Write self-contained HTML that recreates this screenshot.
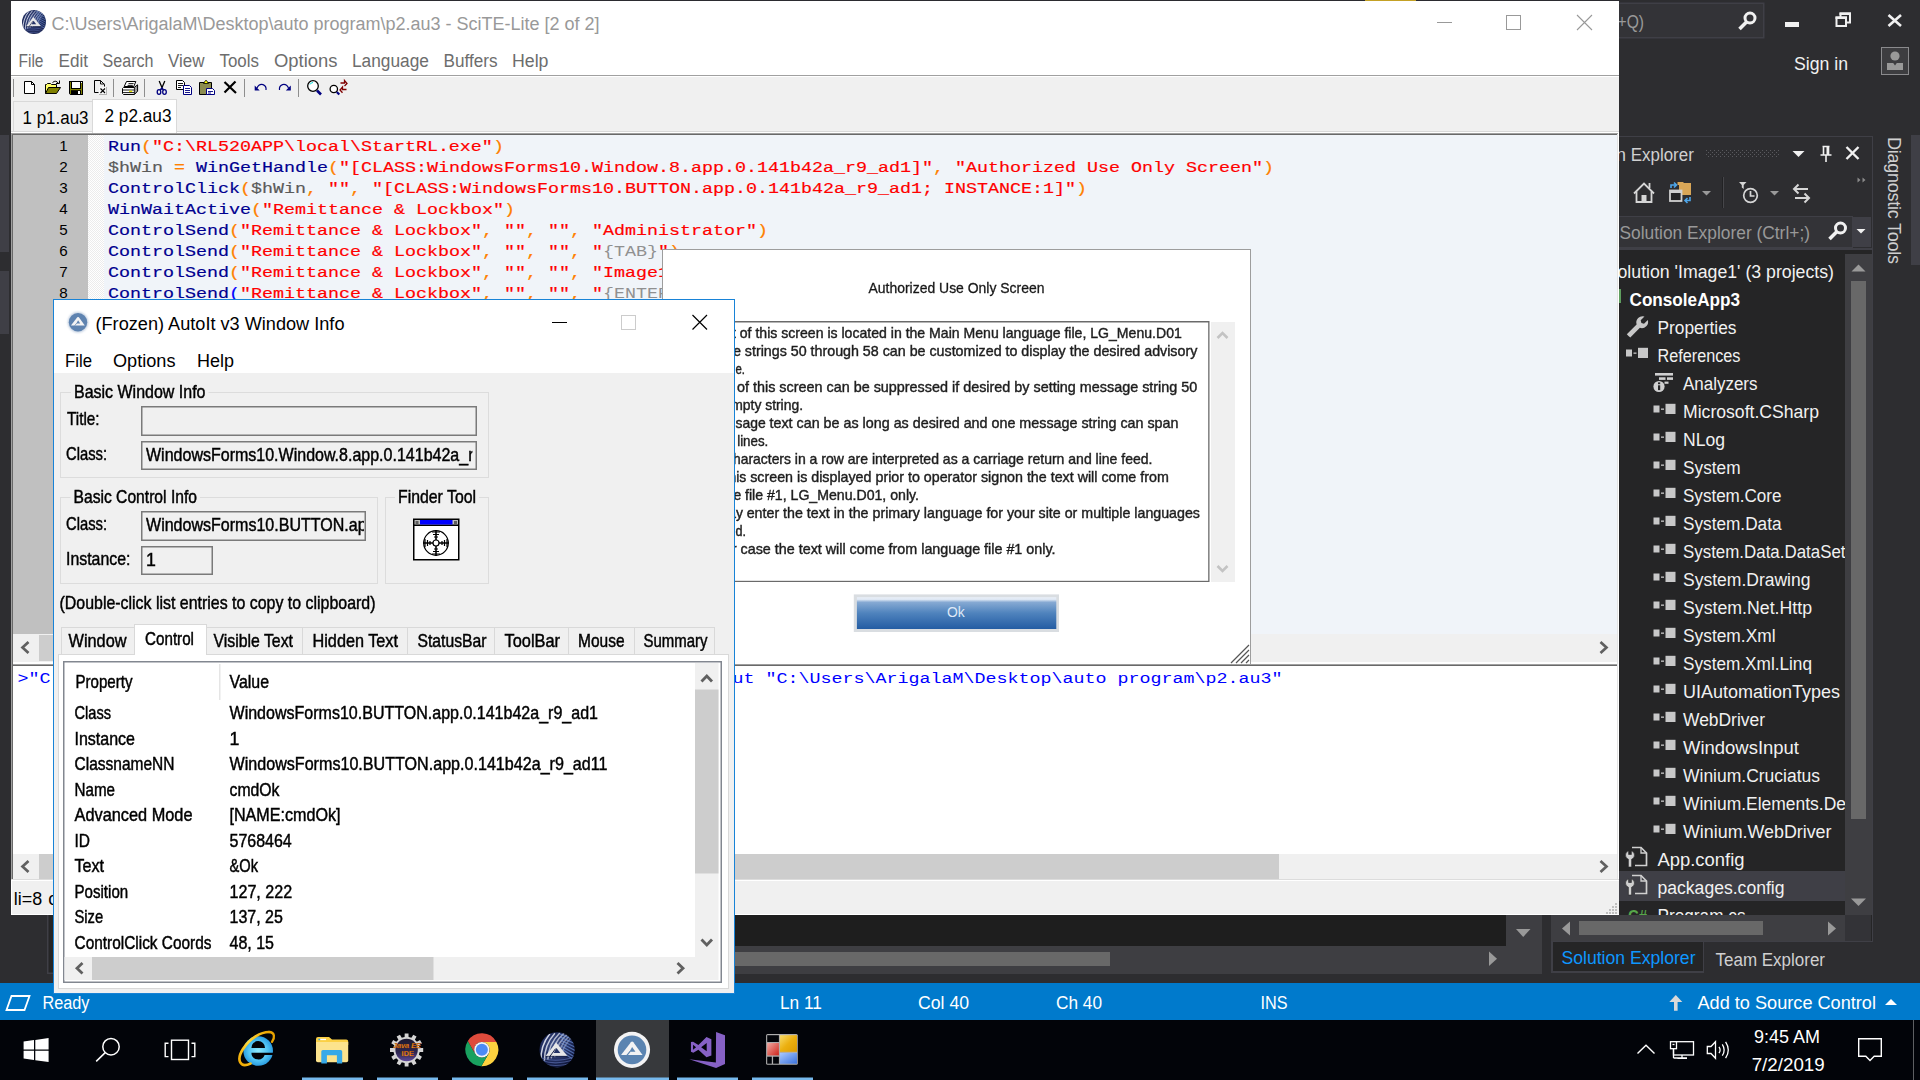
<!DOCTYPE html>
<html><head><meta charset="utf-8"><title>screen</title>
<style>
html,body{margin:0;padding:0;background:#2d2d30;overflow:hidden}
body{width:1920px;height:1080px;font-family:"Liberation Sans",sans-serif}
svg{display:block;position:absolute;left:0;top:0}
text{white-space:pre}
</style></head><body>
<svg width="1920" height="1080" viewBox="0 0 1920 1080">
<rect x="0" y="0" width="1920" height="1080" fill="#2d2d30" />
<rect x="0" y="135" width="9" height="117" fill="#3f3f46" />
<rect x="0" y="271" width="9" height="63" fill="#3f3f46" />
<rect x="1600" y="2.5" width="164.5" height="36.0" fill="#3f3f46" />
<rect x="1600" y="4" width="163" height="33" fill="#333337" />
<text x="1617.5" y="27.5" font-family="Liberation Sans" font-size="18" fill="#999999" textLength="26.5" lengthAdjust="spacingAndGlyphs" >+Q)</text>
<g stroke="#f1f1f1" fill="none"><circle cx="1750" cy="18" r="5" stroke-width="3"/><path d="M1746.5 22 L1739.5 29" stroke-width="3.6"/></g>
<rect x="1785" y="22" width="14" height="5" fill="#f1f1f1" />
<g fill="none" stroke="#f1f1f1" stroke-width="2"><path d="M1840.5 17 V13.5 H1850 V22.5 H1846.5"/><rect x="1836.5" y="17.5" width="9.5" height="8.5"/></g>
<rect x="1839.5" y="12.5" width="11.5" height="2.5" fill="#f1f1f1" />
<rect x="1835.5" y="16.5" width="11.5" height="2.5" fill="#f1f1f1" />
<path d="M1888.5 15 L1901 26 M1901 15 L1888.5 26" stroke="#f1f1f1" stroke-width="2.6" fill="none"/>
<text x="1794" y="70" font-family="Liberation Sans" font-size="18.5" fill="#f1f1f1" textLength="54" lengthAdjust="spacingAndGlyphs" >Sign in</text>
<rect x="1881.5" y="47.5" width="27" height="27" fill="#3d3d40" stroke="#8a8a8d" stroke-width="1"/>
<circle cx="1895" cy="56" r="4.6" fill="#999999"/><path d="M1887 70 V63 H1893.2 L1895 65.5 L1896.8 63 H1903 V70 Z" fill="#999999"/>
<text transform="translate(1887.5,137) rotate(90)" font-family="Liberation Sans" font-size="18" fill="#d0d0d0" textLength="127" lengthAdjust="spacing">Diagnostic Tools</text>
<rect x="1911" y="135" width="9" height="130" fill="#3f3f46" />
<rect x="1619" y="136" width="254" height="805" fill="#252526" />
<rect x="1619" y="136" width="254" height="118" fill="#2d2d30" />
<rect x="1619" y="136" width="254" height="1" fill="#3f3f46" />
<rect x="1872" y="136" width="1" height="805" fill="#3f3f46" />
<text x="1630.8" y="161" font-family="Liberation Sans" font-size="18" fill="#d0d0d0" textLength="63" lengthAdjust="spacingAndGlyphs" >Explorer</text>
<text x="1626" y="161" font-family="Liberation Sans" font-size="18" fill="#d0d0d0" text-anchor="end" >n</text>
<rect x="1706" y="150" width="1" height="1" fill="#5a5a5e" />
<rect x="1710" y="150" width="1" height="1" fill="#5a5a5e" />
<rect x="1714" y="150" width="1" height="1" fill="#5a5a5e" />
<rect x="1718" y="150" width="1" height="1" fill="#5a5a5e" />
<rect x="1722" y="150" width="1" height="1" fill="#5a5a5e" />
<rect x="1726" y="150" width="1" height="1" fill="#5a5a5e" />
<rect x="1730" y="150" width="1" height="1" fill="#5a5a5e" />
<rect x="1734" y="150" width="1" height="1" fill="#5a5a5e" />
<rect x="1738" y="150" width="1" height="1" fill="#5a5a5e" />
<rect x="1742" y="150" width="1" height="1" fill="#5a5a5e" />
<rect x="1746" y="150" width="1" height="1" fill="#5a5a5e" />
<rect x="1750" y="150" width="1" height="1" fill="#5a5a5e" />
<rect x="1754" y="150" width="1" height="1" fill="#5a5a5e" />
<rect x="1758" y="150" width="1" height="1" fill="#5a5a5e" />
<rect x="1762" y="150" width="1" height="1" fill="#5a5a5e" />
<rect x="1766" y="150" width="1" height="1" fill="#5a5a5e" />
<rect x="1770" y="150" width="1" height="1" fill="#5a5a5e" />
<rect x="1774" y="150" width="1" height="1" fill="#5a5a5e" />
<rect x="1778" y="150" width="1" height="1" fill="#5a5a5e" />
<rect x="1708" y="152" width="1" height="1" fill="#5a5a5e" />
<rect x="1712" y="152" width="1" height="1" fill="#5a5a5e" />
<rect x="1716" y="152" width="1" height="1" fill="#5a5a5e" />
<rect x="1720" y="152" width="1" height="1" fill="#5a5a5e" />
<rect x="1724" y="152" width="1" height="1" fill="#5a5a5e" />
<rect x="1728" y="152" width="1" height="1" fill="#5a5a5e" />
<rect x="1732" y="152" width="1" height="1" fill="#5a5a5e" />
<rect x="1736" y="152" width="1" height="1" fill="#5a5a5e" />
<rect x="1740" y="152" width="1" height="1" fill="#5a5a5e" />
<rect x="1744" y="152" width="1" height="1" fill="#5a5a5e" />
<rect x="1748" y="152" width="1" height="1" fill="#5a5a5e" />
<rect x="1752" y="152" width="1" height="1" fill="#5a5a5e" />
<rect x="1756" y="152" width="1" height="1" fill="#5a5a5e" />
<rect x="1760" y="152" width="1" height="1" fill="#5a5a5e" />
<rect x="1764" y="152" width="1" height="1" fill="#5a5a5e" />
<rect x="1768" y="152" width="1" height="1" fill="#5a5a5e" />
<rect x="1772" y="152" width="1" height="1" fill="#5a5a5e" />
<rect x="1776" y="152" width="1" height="1" fill="#5a5a5e" />
<rect x="1706" y="154" width="1" height="1" fill="#5a5a5e" />
<rect x="1710" y="154" width="1" height="1" fill="#5a5a5e" />
<rect x="1714" y="154" width="1" height="1" fill="#5a5a5e" />
<rect x="1718" y="154" width="1" height="1" fill="#5a5a5e" />
<rect x="1722" y="154" width="1" height="1" fill="#5a5a5e" />
<rect x="1726" y="154" width="1" height="1" fill="#5a5a5e" />
<rect x="1730" y="154" width="1" height="1" fill="#5a5a5e" />
<rect x="1734" y="154" width="1" height="1" fill="#5a5a5e" />
<rect x="1738" y="154" width="1" height="1" fill="#5a5a5e" />
<rect x="1742" y="154" width="1" height="1" fill="#5a5a5e" />
<rect x="1746" y="154" width="1" height="1" fill="#5a5a5e" />
<rect x="1750" y="154" width="1" height="1" fill="#5a5a5e" />
<rect x="1754" y="154" width="1" height="1" fill="#5a5a5e" />
<rect x="1758" y="154" width="1" height="1" fill="#5a5a5e" />
<rect x="1762" y="154" width="1" height="1" fill="#5a5a5e" />
<rect x="1766" y="154" width="1" height="1" fill="#5a5a5e" />
<rect x="1770" y="154" width="1" height="1" fill="#5a5a5e" />
<rect x="1774" y="154" width="1" height="1" fill="#5a5a5e" />
<rect x="1778" y="154" width="1" height="1" fill="#5a5a5e" />
<rect x="1708" y="156" width="1" height="1" fill="#5a5a5e" />
<rect x="1712" y="156" width="1" height="1" fill="#5a5a5e" />
<rect x="1716" y="156" width="1" height="1" fill="#5a5a5e" />
<rect x="1720" y="156" width="1" height="1" fill="#5a5a5e" />
<rect x="1724" y="156" width="1" height="1" fill="#5a5a5e" />
<rect x="1728" y="156" width="1" height="1" fill="#5a5a5e" />
<rect x="1732" y="156" width="1" height="1" fill="#5a5a5e" />
<rect x="1736" y="156" width="1" height="1" fill="#5a5a5e" />
<rect x="1740" y="156" width="1" height="1" fill="#5a5a5e" />
<rect x="1744" y="156" width="1" height="1" fill="#5a5a5e" />
<rect x="1748" y="156" width="1" height="1" fill="#5a5a5e" />
<rect x="1752" y="156" width="1" height="1" fill="#5a5a5e" />
<rect x="1756" y="156" width="1" height="1" fill="#5a5a5e" />
<rect x="1760" y="156" width="1" height="1" fill="#5a5a5e" />
<rect x="1764" y="156" width="1" height="1" fill="#5a5a5e" />
<rect x="1768" y="156" width="1" height="1" fill="#5a5a5e" />
<rect x="1772" y="156" width="1" height="1" fill="#5a5a5e" />
<rect x="1776" y="156" width="1" height="1" fill="#5a5a5e" />
<path d="M1792.5 151 H1804.5 L1798.5 157 Z" fill="#f1f1f1" stroke="none" stroke-width="1" />
<g fill="none" stroke="#f1f1f1" stroke-width="1.6"><path d="M1822.5 146.5 H1829.5 M1823.5 147 V154.5 M1828.5 147 V154.5 M1820.5 155 H1831.5 M1826 155 V162"/></g>
<rect x="1826.5" y="147" width="2.5" height="8" fill="#f1f1f1" />
<path d="M1846.5 147 L1858.5 159 M1858.5 147 L1846.5 159" stroke="#f1f1f1" stroke-width="2.4" fill="none"/>
<g fill="none" stroke="#d6d6d6" stroke-width="1.8"><path d="M1634 193.5 L1644 183.5 L1654 193.5"/><path d="M1636.5 191.5 V202 H1651.5 V191.5"/><path d="M1649.5 183 V188"/></g>
<rect x="1641.5" y="195" width="5.0" height="7" fill="#d6d6d6" />
<g><rect x="1679" y="183" width="12" height="12" fill="#d8a657"/><rect x="1677.5" y="182" width="6" height="3" fill="#d8a657"/><rect x="1670" y="190.5" width="11.5" height="10.5" fill="#252526" stroke="#d0d0d0" stroke-width="1.8"/><rect x="1670" y="190" width="11.5" height="3" fill="#d0d0d0"/><path d="M1671 188 V185 H1676 M1674 182.5 L1676.5 185 L1674 187.5" fill="none" stroke="#4ea6ea" stroke-width="1.6"/><path d="M1690 197 V200.5 H1685.5 M1687.5 198 L1685 200.5 L1687.5 203" fill="none" stroke="#4ea6ea" stroke-width="1.6"/></g>
<path d="M1702 191 H1711 L1706.5 195.5 Z" fill="#999999" stroke="none" stroke-width="1" />
<rect x="1722" y="177" width="1" height="31" fill="#222224" />
<rect x="1723" y="177" width="1" height="31" fill="#46464a" />
<g fill="none" stroke="#d6d6d6" stroke-width="1.7"><circle cx="1750.5" cy="195.5" r="6.8"/><path d="M1750.5 191 V196 H1754.5"/></g>
<path d="M1739 182 H1746.5 L1743.7 185 V189 L1741.8 187.5 V185 Z" fill="#d6d6d6" stroke="none" stroke-width="1" />
<path d="M1770 191 H1779 L1774.5 195.5 Z" fill="#999999" stroke="none" stroke-width="1" />
<g fill="none" stroke="#d6d6d6" stroke-width="2"><path d="M1794 189 H1808 M1798.5 184.5 L1794 189 L1798.5 193.5"/><path d="M1795 198 H1809 M1804.5 193.5 L1809 198 L1804.5 202.5"/></g>
<path d="M1857.5 177.5 L1860.5 180 L1857.5 182.5 Z M1862.5 177.5 L1865.5 180 L1862.5 182.5 Z" fill="#8a8a8a" stroke="none" stroke-width="1" />
<rect x="1619" y="216" width="234" height="32" fill="#3f3f46" />
<rect x="1619" y="217" width="233" height="30" fill="#333337" />
<text x="1619.5" y="238.5" font-family="Liberation Sans" font-size="18" fill="#999999" textLength="190.5" lengthAdjust="spacingAndGlyphs" >Solution Explorer (Ctrl+;)</text>
<g stroke="#f1f1f1" fill="none"><circle cx="1840.5" cy="228" r="5" stroke-width="3"/><path d="M1837 231.5 L1829.5 239" stroke-width="3.6"/></g>
<rect x="1853" y="217" width="18" height="30" fill="#3f3f46" />
<path d="M1856.5 229 H1865.5 L1861 233.5 Z" fill="#f1f1f1" stroke="none" stroke-width="1" />
<rect x="1619" y="248" width="253" height="2" fill="#3f3f46" />
<rect x="1619" y="250" width="253" height="4" fill="#252526" />
<rect x="1845" y="254" width="27" height="661" fill="#3e3e42" />
<path d="M1851.5 271.5 L1858.5 264.5 L1865.5 271.5 Z" fill="#999999" stroke="none" stroke-width="1" />
<rect x="1851" y="281" width="15" height="538" fill="#686868" />
<path d="M1851 898.5 H1866 L1858.5 906 Z" fill="#999999" stroke="none" stroke-width="1" />
<text x="1617.5" y="278" font-family="Liberation Sans" font-size="18" fill="#f1f1f1" textLength="216.5" lengthAdjust="spacingAndGlyphs" >olution &#x27;Image1&#x27; (3 projects)</text>
<rect x="1619" y="289" width="2" height="14" fill="#5f9e5f" />
<text x="1629.5" y="306" font-family="Liberation Sans" font-size="18" fill="#ffffff" font-weight="bold" textLength="110.5" lengthAdjust="spacingAndGlyphs" >ConsoleApp3</text>
<path d="M1628.5 336 L1626.8 334.2 L1636.6 324.4 A6.3 6.3 0 0 1 1644.5 316.5 L1640.7 320.3 L1641.4 323 L1644 323.7 L1647.8 319.9 A6.3 6.3 0 0 1 1639.9 327.8 L1630.3 337.4 Z" fill="#c8c8c8"/>
<text x="1657.5" y="334" font-family="Liberation Sans" font-size="18" fill="#f1f1f1" textLength="79" lengthAdjust="spacingAndGlyphs" >Properties</text>
<rect x="1626" y="349.5" width="6" height="7.0" fill="#c8c8c8" />
<rect x="1633.5" y="352.5" width="3.0" height="1.3000000000000114" fill="#c8c8c8" />
<rect x="1638" y="347.8" width="10" height="10.199999999999989" fill="#c8c8c8" />
<text x="1657.5" y="362" font-family="Liberation Sans" font-size="18" fill="#f1f1f1" textLength="83" lengthAdjust="spacingAndGlyphs" >References</text>
<g fill="#d0d0d0"><rect x="1655" y="373" width="18" height="2.6"/><rect x="1659" y="377.3" width="6.5" height="2.6"/><rect x="1667" y="377.3" width="6" height="2.6"/><rect x="1664.5" y="381.6" width="4" height="2.2"/><circle cx="1659" cy="386.5" r="5.6"/></g><rect x="1658" y="385.3" width="2.2" height="4.8" fill="#252526"/><rect x="1658" y="382.4" width="2.2" height="1.8" fill="#252526"/>
<text x="1683" y="390" font-family="Liberation Sans" font-size="18" fill="#f1f1f1" textLength="74.5" lengthAdjust="spacingAndGlyphs" >Analyzers</text>
<rect x="1653.5" y="405.5" width="6.0" height="7.0" fill="#c8c8c8" />
<rect x="1661.0" y="408.5" width="3.0" height="1.3000000000000114" fill="#c8c8c8" />
<rect x="1665.5" y="403.8" width="10.0" height="10.199999999999989" fill="#c8c8c8" />
<text x="1683" y="418" font-family="Liberation Sans" font-size="18" fill="#f1f1f1" textLength="136" lengthAdjust="spacingAndGlyphs" >Microsoft.CSharp</text>
<rect x="1653.5" y="433.5" width="6.0" height="7.0" fill="#c8c8c8" />
<rect x="1661.0" y="436.5" width="3.0" height="1.3000000000000114" fill="#c8c8c8" />
<rect x="1665.5" y="431.8" width="10.0" height="10.199999999999989" fill="#c8c8c8" />
<text x="1683" y="446" font-family="Liberation Sans" font-size="18" fill="#f1f1f1" textLength="42" lengthAdjust="spacingAndGlyphs" >NLog</text>
<rect x="1653.5" y="461.5" width="6.0" height="7.0" fill="#c8c8c8" />
<rect x="1661.0" y="464.5" width="3.0" height="1.3000000000000114" fill="#c8c8c8" />
<rect x="1665.5" y="459.8" width="10.0" height="10.199999999999989" fill="#c8c8c8" />
<text x="1683" y="474" font-family="Liberation Sans" font-size="18" fill="#f1f1f1" textLength="57.5" lengthAdjust="spacingAndGlyphs" >System</text>
<rect x="1653.5" y="489.5" width="6.0" height="7.0" fill="#c8c8c8" />
<rect x="1661.0" y="492.5" width="3.0" height="1.3000000000000114" fill="#c8c8c8" />
<rect x="1665.5" y="487.8" width="10.0" height="10.199999999999989" fill="#c8c8c8" />
<text x="1683" y="502" font-family="Liberation Sans" font-size="18" fill="#f1f1f1" textLength="98.5" lengthAdjust="spacingAndGlyphs" >System.Core</text>
<rect x="1653.5" y="517.5" width="6.0" height="7.0" fill="#c8c8c8" />
<rect x="1661.0" y="520.5" width="3.0" height="1.2999999999999545" fill="#c8c8c8" />
<rect x="1665.5" y="515.8" width="10.0" height="10.200000000000045" fill="#c8c8c8" />
<text x="1683" y="530" font-family="Liberation Sans" font-size="18" fill="#f1f1f1" textLength="98.5" lengthAdjust="spacingAndGlyphs" >System.Data</text>
<rect x="1653.5" y="545.5" width="6.0" height="7.0" fill="#c8c8c8" />
<rect x="1661.0" y="548.5" width="3.0" height="1.2999999999999545" fill="#c8c8c8" />
<rect x="1665.5" y="543.8" width="10.0" height="10.200000000000045" fill="#c8c8c8" />
<text x="1683" y="558" font-family="Liberation Sans" font-size="18" fill="#f1f1f1" textLength="162.5" lengthAdjust="spacingAndGlyphs" >System.Data.DataSet</text>
<rect x="1653.5" y="573.5" width="6.0" height="7.0" fill="#c8c8c8" />
<rect x="1661.0" y="576.5" width="3.0" height="1.2999999999999545" fill="#c8c8c8" />
<rect x="1665.5" y="571.8" width="10.0" height="10.200000000000045" fill="#c8c8c8" />
<text x="1683" y="586" font-family="Liberation Sans" font-size="18" fill="#f1f1f1" textLength="127.5" lengthAdjust="spacingAndGlyphs" >System.Drawing</text>
<rect x="1653.5" y="601.5" width="6.0" height="7.0" fill="#c8c8c8" />
<rect x="1661.0" y="604.5" width="3.0" height="1.2999999999999545" fill="#c8c8c8" />
<rect x="1665.5" y="599.8" width="10.0" height="10.200000000000045" fill="#c8c8c8" />
<text x="1683" y="614" font-family="Liberation Sans" font-size="18" fill="#f1f1f1" textLength="129" lengthAdjust="spacingAndGlyphs" >System.Net.Http</text>
<rect x="1653.5" y="629.5" width="6.0" height="7.0" fill="#c8c8c8" />
<rect x="1661.0" y="632.5" width="3.0" height="1.2999999999999545" fill="#c8c8c8" />
<rect x="1665.5" y="627.8" width="10.0" height="10.200000000000045" fill="#c8c8c8" />
<text x="1683" y="642" font-family="Liberation Sans" font-size="18" fill="#f1f1f1" textLength="92.5" lengthAdjust="spacingAndGlyphs" >System.Xml</text>
<rect x="1653.5" y="657.5" width="6.0" height="7.0" fill="#c8c8c8" />
<rect x="1661.0" y="660.5" width="3.0" height="1.2999999999999545" fill="#c8c8c8" />
<rect x="1665.5" y="655.8" width="10.0" height="10.200000000000045" fill="#c8c8c8" />
<text x="1683" y="670" font-family="Liberation Sans" font-size="18" fill="#f1f1f1" textLength="129" lengthAdjust="spacingAndGlyphs" >System.Xml.Linq</text>
<rect x="1653.5" y="685.5" width="6.0" height="7.0" fill="#c8c8c8" />
<rect x="1661.0" y="688.5" width="3.0" height="1.2999999999999545" fill="#c8c8c8" />
<rect x="1665.5" y="683.8" width="10.0" height="10.200000000000045" fill="#c8c8c8" />
<text x="1683" y="698" font-family="Liberation Sans" font-size="18" fill="#f1f1f1" textLength="157" lengthAdjust="spacingAndGlyphs" >UIAutomationTypes</text>
<rect x="1653.5" y="713.5" width="6.0" height="7.0" fill="#c8c8c8" />
<rect x="1661.0" y="716.5" width="3.0" height="1.2999999999999545" fill="#c8c8c8" />
<rect x="1665.5" y="711.8" width="10.0" height="10.200000000000045" fill="#c8c8c8" />
<text x="1683" y="726" font-family="Liberation Sans" font-size="18" fill="#f1f1f1" textLength="82" lengthAdjust="spacingAndGlyphs" >WebDriver</text>
<rect x="1653.5" y="741.5" width="6.0" height="7.0" fill="#c8c8c8" />
<rect x="1661.0" y="744.5" width="3.0" height="1.2999999999999545" fill="#c8c8c8" />
<rect x="1665.5" y="739.8" width="10.0" height="10.200000000000045" fill="#c8c8c8" />
<text x="1683" y="754" font-family="Liberation Sans" font-size="18" fill="#f1f1f1" textLength="116" lengthAdjust="spacingAndGlyphs" >WindowsInput</text>
<rect x="1653.5" y="769.5" width="6.0" height="7.0" fill="#c8c8c8" />
<rect x="1661.0" y="772.5" width="3.0" height="1.2999999999999545" fill="#c8c8c8" />
<rect x="1665.5" y="767.8" width="10.0" height="10.200000000000045" fill="#c8c8c8" />
<text x="1683" y="782" font-family="Liberation Sans" font-size="18" fill="#f1f1f1" textLength="137" lengthAdjust="spacingAndGlyphs" >Winium.Cruciatus</text>
<rect x="1653.5" y="797.5" width="6.0" height="7.0" fill="#c8c8c8" />
<rect x="1661.0" y="800.5" width="3.0" height="1.2999999999999545" fill="#c8c8c8" />
<rect x="1665.5" y="795.8" width="10.0" height="10.200000000000045" fill="#c8c8c8" />
<text x="1683" y="810" font-family="Liberation Sans" font-size="18" fill="#f1f1f1" textLength="163" lengthAdjust="spacingAndGlyphs" >Winium.Elements.De</text>
<rect x="1653.5" y="825.5" width="6.0" height="7.0" fill="#c8c8c8" />
<rect x="1661.0" y="828.5" width="3.0" height="1.2999999999999545" fill="#c8c8c8" />
<rect x="1665.5" y="823.8" width="10.0" height="10.200000000000045" fill="#c8c8c8" />
<text x="1683" y="838" font-family="Liberation Sans" font-size="18" fill="#f1f1f1" textLength="148.5" lengthAdjust="spacingAndGlyphs" >Winium.WebDriver</text>
<rect x="1845" y="254" width="27" height="661" fill="#3e3e42" />
<path d="M1851.5 271.5 L1858.5 264.5 L1865.5 271.5 Z" fill="#999999" stroke="none" stroke-width="1" />
<rect x="1851" y="281" width="15" height="538" fill="#686868" />
<path d="M1851 898.5 H1866 L1858.5 906 Z" fill="#999999" stroke="none" stroke-width="1" />
<g fill="none" stroke="#d0d0d0" stroke-width="1.7"><path d="M1632 847.5 H1641 L1646.5 853 V865.5 H1635"/><path d="M1641 847.5 V853 H1646.5" stroke-width="1.3"/></g>
<path d="M1628.6 851 V854.5 H1631.4 V851 A4.3 4.3 0 0 1 1631.6 859.2 V867 H1628.4 V859.2 A4.3 4.3 0 0 1 1628.6 851 Z" fill="#d0d0d0" stroke="#252526" stroke-width="0.6"/>
<text x="1657.5" y="866" font-family="Liberation Sans" font-size="18" fill="#f1f1f1" textLength="87" lengthAdjust="spacingAndGlyphs" >App.config</text>
<rect x="1619" y="871" width="226" height="30" fill="#3f3f46" />
<g fill="none" stroke="#d0d0d0" stroke-width="1.7"><path d="M1632 875.5 H1641 L1646.5 881 V893.5 H1635"/><path d="M1641 875.5 V881 H1646.5" stroke-width="1.3"/></g>
<path d="M1628.6 879 V882.5 H1631.4 V879 A4.3 4.3 0 0 1 1631.6 887.2 V895 H1628.4 V887.2 A4.3 4.3 0 0 1 1628.6 879 Z" fill="#d0d0d0" stroke="#252526" stroke-width="0.6"/>
<text x="1657.5" y="894" font-family="Liberation Sans" font-size="18" fill="#f1f1f1" textLength="127" lengthAdjust="spacingAndGlyphs" >packages.config</text>
<clipPath id="cpProg"><rect x="1619" y="901" width="226" height="14"/></clipPath><g clip-path="url(#cpProg)">
<text x="1628" y="922" font-family="Liberation Sans" font-size="17" fill="#57a64a" font-weight="bold" textLength="19" lengthAdjust="spacingAndGlyphs" >C#</text>
<text x="1657.5" y="922" font-family="Liberation Sans" font-size="18" fill="#f1f1f1" textLength="88" lengthAdjust="spacingAndGlyphs" >Program.cs</text>
</g>
<rect x="53" y="915" width="1453" height="31" fill="#1e1e1e" />
<rect x="53" y="946" width="1453" height="28" fill="#3e3e42" />
<rect x="60" y="952" width="1050" height="14" fill="#686868" />
<rect x="47" y="915" width="6" height="59" fill="#3f3f46" />
<rect x="48.5" y="915" width="4.5" height="57.5" fill="#252526" />
<path d="M1489 951.5 V966 L1497 958.8 Z" fill="#999999" stroke="none" stroke-width="1" />
<rect x="1506" y="915" width="36" height="59" fill="#3e3e42" />
<path d="M1516 929 H1530.5 L1523.2 937 Z" fill="#999999" stroke="none" stroke-width="1" />
<rect x="1542" y="915" width="9" height="68" fill="#2d2d30" />
<rect x="1551" y="915" width="294" height="26" fill="#3e3e42" />
<path d="M1570 921.5 V935.5 L1562 928.5 Z" fill="#999999" stroke="none" stroke-width="1" />
<rect x="1579" y="921" width="184" height="14" fill="#686868" />
<path d="M1828 921.5 V935.5 L1836 928.5 Z" fill="#999999" stroke="none" stroke-width="1" />
<rect x="1845" y="915" width="26" height="26" fill="#333337" />
<rect x="1551" y="941" width="322" height="1" fill="#3f3f46" />
<rect x="1551" y="941" width="153" height="32" fill="#3f3f46" />
<rect x="1553" y="942" width="150" height="29" fill="#252526" />
<text x="1561.5" y="964" font-family="Liberation Sans" font-size="18" fill="#0e97ff" textLength="134" lengthAdjust="spacingAndGlyphs" >Solution Explorer</text>
<text x="1715.5" y="966" font-family="Liberation Sans" font-size="18" fill="#d0d0d0" textLength="109.5" lengthAdjust="spacingAndGlyphs" >Team Explorer</text>
<rect x="0" y="974" width="1920" height="9" fill="#2d2d30" />
<rect x="1873" y="136" width="4" height="838" fill="#2d2d30" />
<rect x="0" y="983" width="1920" height="37" fill="#007acc" />
<path d="M11.5 996 H29.5 L24.5 1010 H6.5 Z" fill="none" stroke="#ffffff" stroke-width="1.8" />
<text x="42.5" y="1009" font-family="Liberation Sans" font-size="18" fill="#ffffff" textLength="47" lengthAdjust="spacingAndGlyphs" >Ready</text>
<text x="780" y="1009" font-family="Liberation Sans" font-size="18" fill="#ffffff" textLength="42" lengthAdjust="spacingAndGlyphs" >Ln 11</text>
<text x="918" y="1009" font-family="Liberation Sans" font-size="18" fill="#ffffff" textLength="51" lengthAdjust="spacingAndGlyphs" >Col 40</text>
<text x="1056" y="1009" font-family="Liberation Sans" font-size="18" fill="#ffffff" textLength="46" lengthAdjust="spacingAndGlyphs" >Ch 40</text>
<text x="1260.5" y="1009" font-family="Liberation Sans" font-size="18" fill="#ffffff" textLength="27" lengthAdjust="spacingAndGlyphs" >INS</text>
<path d="M1675.8 995 L1682.3 1002 H1677.6 V1010.8 H1674 V1002 H1669.3 Z" fill="#d9d9d9" stroke="none" stroke-width="1" />
<text x="1697.5" y="1009" font-family="Liberation Sans" font-size="18" fill="#ffffff" textLength="178.5" lengthAdjust="spacingAndGlyphs" >Add to Source Control</text>
<path d="M1885 1005 L1891 999 L1897 1005 Z" fill="#ffffff" stroke="none" stroke-width="1" />
<rect x="11" y="0" width="1608" height="915" fill="#ffffff" />
<rect x="11" y="0" width="1608" height="1" fill="#2b2b30" />
<rect x="1365" y="0" width="51" height="1" fill="#c4a125" />
<defs><radialGradient id="sgb" cx="0.45" cy="0.4" r="0.65"><stop offset="0" stop-color="#46578f"/><stop offset="0.6" stop-color="#222e60"/><stop offset="1" stop-color="#141b40"/></radialGradient><clipPath id="scb"><circle cx="34" cy="22" r="12"/></clipPath></defs>
<circle cx="34" cy="22" r="12" fill="url(#sgb)"/>
<g clip-path="url(#scb)" fill="none">
<path d="M23.02 30.28 Q22.34 19.38 29.16 10.85" stroke="#eef2fb" stroke-width="0.99" opacity="0.85"/>
<path d="M25.34 29.47 Q25.2 18.69 32.5 10.65" stroke="#eef2fb" stroke-width="0.99" opacity="0.77"/>
<path d="M27.66 28.65 Q28.07 18.01 35.84 10.44" stroke="#eef2fb" stroke-width="0.99" opacity="0.69"/>
<path d="M29.98 27.83 Q30.93 17.33 39.18 10.24" stroke="#eef2fb" stroke-width="0.99" opacity="0.61"/>
<path d="M32.3 27.01 Q33.8 16.65 42.52 10.03" stroke="#eef2fb" stroke-width="0.99" opacity="0.53"/>
<path d="M34.61 26.19 Q36.66 15.97 45.86 9.83" stroke="#eef2fb" stroke-width="0.99" opacity="0.45"/>
<path d="M36.93 25.38 Q39.52 15.28 49.2 9.63" stroke="#eef2fb" stroke-width="0.99" opacity="0.37"/>
<path d="M35.98 11.19 Q41.43 13.58 47.57 15.97" stroke="#7299e2" stroke-width="0.82" opacity="0.62"/>
<path d="M36.32 13.31 Q41.43 15.69 47.57 18.35" stroke="#7299e2" stroke-width="0.82" opacity="0.62"/>
<path d="M36.66 15.42 Q41.43 17.81 47.57 20.74" stroke="#7299e2" stroke-width="0.82" opacity="0.62"/>
<path d="M37.0 17.53 Q41.43 19.92 47.57 23.13" stroke="#7299e2" stroke-width="0.82" opacity="0.62"/>
<path d="M37.34 19.65 Q41.43 22.03 47.57 25.51" stroke="#7299e2" stroke-width="0.82" opacity="0.62"/>
<path d="M37.68 21.76 Q41.43 24.15 47.57 27.9" stroke="#7299e2" stroke-width="0.82" opacity="0.62"/>
<path d="M38.02 23.88 Q41.43 26.26 47.57 30.28" stroke="#7299e2" stroke-width="0.82" opacity="0.62"/>
<path d="M23.7 27.56 Q33.25 30.97 45.52 26.88" stroke="#6a7fc4" stroke-width="0.75" opacity="0.55"/>
<path d="M23.7 29.33 Q33.25 32.74 45.52 28.65" stroke="#6a7fc4" stroke-width="0.75" opacity="0.55"/>
<path d="M23.7 31.1 Q33.25 34.51 45.52 30.42" stroke="#6a7fc4" stroke-width="0.75" opacity="0.55"/>
<path d="M23.7 32.88 Q33.25 36.28 45.52 32.19" stroke="#6a7fc4" stroke-width="0.75" opacity="0.55"/>
<path d="M23.7 34.65 Q33.25 38.06 45.52 33.97" stroke="#6a7fc4" stroke-width="0.75" opacity="0.55"/>
</g>
<path d="M26.16 26.13 L33.32 16.92 L41.02 26.13 Z" fill="#e6e6e8"/>
<path d="M33.59 20.74 L36.18 24.15 H31.61 Z" fill="#243266"/>
<path d="M29.3 26.19 L32.98 21.15" stroke="#1a244a" stroke-width="0.68"/>
<path d="M26.16 26.4 H41.02" stroke="#10183a" stroke-width="0.55" opacity="0.8"/>
<text x="51.5" y="30" font-family="Liberation Sans" font-size="18" fill="#999999" textLength="548" lengthAdjust="spacingAndGlyphs" >C:\Users\ArigalaM\Desktop\auto program\p2.au3 - SciTE-Lite [2 of 2]</text>
<rect x="1437" y="22" width="15" height="1" fill="#999999" />
<rect x="1506.5" y="15.5" width="14" height="14" fill="none" stroke="#999999" stroke-width="1"/>
<path d="M1577 15 L1592 30 M1592 15 L1577 30" stroke="#999999" stroke-width="1.1" fill="none"/>
<text x="18.5" y="67" font-family="Liberation Sans" font-size="18" fill="#6d6d6d" textLength="25" lengthAdjust="spacingAndGlyphs" >File</text>
<text x="58.5" y="67" font-family="Liberation Sans" font-size="18" fill="#6d6d6d" textLength="29.5" lengthAdjust="spacingAndGlyphs" >Edit</text>
<text x="102.5" y="67" font-family="Liberation Sans" font-size="18" fill="#6d6d6d" textLength="51" lengthAdjust="spacingAndGlyphs" >Search</text>
<text x="168" y="67" font-family="Liberation Sans" font-size="18" fill="#6d6d6d" textLength="36.5" lengthAdjust="spacingAndGlyphs" >View</text>
<text x="219.5" y="67" font-family="Liberation Sans" font-size="18" fill="#6d6d6d" textLength="39.5" lengthAdjust="spacingAndGlyphs" >Tools</text>
<text x="274" y="67" font-family="Liberation Sans" font-size="18" fill="#6d6d6d" textLength="63.5" lengthAdjust="spacingAndGlyphs" >Options</text>
<text x="352" y="67" font-family="Liberation Sans" font-size="18" fill="#6d6d6d" textLength="77" lengthAdjust="spacingAndGlyphs" >Language</text>
<text x="443.5" y="67" font-family="Liberation Sans" font-size="18" fill="#6d6d6d" textLength="54" lengthAdjust="spacingAndGlyphs" >Buffers</text>
<text x="512" y="67" font-family="Liberation Sans" font-size="18" fill="#6d6d6d" textLength="36.5" lengthAdjust="spacingAndGlyphs" >Help</text>
<rect x="11" y="75" width="1608" height="1" fill="#a0a0a0" />
<rect x="11" y="76" width="1608" height="1" fill="#ffffff" />
<rect x="11" y="77" width="1608" height="56" fill="#f0f0f0" />
<rect x="13" y="79" width="1" height="18" fill="#8e8e8e" />
<rect x="113" y="79" width="1" height="18" fill="#8e8e8e" />
<rect x="144" y="79" width="1" height="18" fill="#8e8e8e" />
<rect x="244" y="79" width="1" height="18" fill="#8e8e8e" />
<rect x="298" y="79" width="1" height="18" fill="#8e8e8e" />
<path d="M24.5 81.5 H31.5 L34.5 84.5 V93.5 H24.5 Z" fill="#fff" stroke="#000000" stroke-width="1" />
<path d="M31.5 81.5 V84.5 H34.5" fill="none" stroke="#000000" stroke-width="1" />
<path d="M45.5 93.5 V84.5 H46.5 L47.5 83.5 H50.5 L51.5 84.5 H56.5 V87.5" fill="#ffff66" stroke="#000000" stroke-width="1" />
<path d="M45.5 93.5 L48.5 87.5 H60.5 L56.5 93.5 Z" fill="#808000" stroke="#000000" stroke-width="1" />
<path d="M52.5 82.5 Q56 79.5 58.5 83.5 M56 83.5 H59.5 V80.5" fill="none" stroke="#000000" stroke-width="1" />
<rect x="69" y="81" width="14" height="14" fill="#000000" />
<rect x="70" y="82" width="1" height="12" fill="#808000" />
<rect x="81" y="82" width="1" height="12" fill="#808000" />
<rect x="71" y="89" width="11" height="1.2000000000000028" fill="#808000" />
<rect x="72" y="82" width="8" height="6" fill="#ffffff" />
<rect x="78" y="91" width="2" height="3" fill="#ffffff" />
<rect x="81" y="82" width="1" height="1" fill="#ffffff" />
<path d="M69 95 V93.5 L70.5 95 Z" fill="#f0f0f0" stroke="none" stroke-width="1" />
<path d="M94.5 80.5 H100.5 L104.5 84.5 V86.5" fill="none" stroke="#000000" stroke-width="1" />
<path d="M94.5 80.5 V92.5 H98.5" fill="none" stroke="#000000" stroke-width="1" />
<path d="M100.5 80.5 V84 H104.5" fill="none" stroke="#000000" stroke-width="0.9" />
<rect x="99" y="87" width="8" height="8" fill="#b4b4b4" />
<rect x="99" y="87" width="7" height="7" fill="#f8f8f8" />
<path d="M100.5 88.5 L105 93 M105 88.5 L100.5 93" fill="none" stroke="#000000" stroke-width="1.1" />
<path d="M126.5 81.5 H135.8 L133.8 86.5 H124.2 Z" fill="#fff" stroke="#000000" stroke-width="1" />
<path d="M128.5 83.6 H133.6 M127.6 85.4 H132.8" fill="none" stroke="#000000" stroke-width="0.9" />
<path d="M123.5 87.5 H134.2 L137.6 84.8 V91.2 L134.4 94.5 H123.5 L122.5 93.5 V88.5 Z" fill="#fff" stroke="#000000" stroke-width="1" />
<path d="M122.5 90 H134.4 M123 92.6 H134.4 M134.4 87.5 V94.5" fill="none" stroke="#000000" stroke-width="0.9" />
<rect x="129" y="90.7" width="3.1999999999999886" height="1.2999999999999972" fill="#e6e600" />
<path d="M135 88.5 L137.3 86.3 M135 90.5 L137.3 88.3 M135 92.5 L137.3 90.3" fill="none" stroke="#000000" stroke-width="0.8" />
<path d="M159.2 81 L162.8 89.5 M164.8 81 L161.2 89.5" fill="none" stroke="#000000" stroke-width="1.3" />
<g fill="none" stroke="#000080" stroke-width="1.3"><ellipse cx="159" cy="92" rx="1.8" ry="2.4"/><ellipse cx="164.5" cy="92" rx="1.8" ry="2.4"/><path d="M160 90 L162 88 L163.5 90"/></g>
<path d="M176.5 80.5 H182.5 L184.5 82.5 V89.5 H176.5 Z" fill="#fff" stroke="#000000" stroke-width="1" />
<path d="M178 83.5 H183 M178 85.5 H183 M178 87.5 H181" fill="none" stroke="#000000" stroke-width="0.9" />
<path d="M183.5 85.5 H189.5 L191.5 87.5 V94.5 H183.5 Z" fill="#fff" stroke="#000080" stroke-width="1" />
<path d="M185 88.5 H190 M185 90.5 H190 M185 92.5 H190" fill="none" stroke="#000080" stroke-width="0.9" />
<path d="M199.5 82.5 H211.5 V94.5 H199.5 Z" fill="#8c8c50" stroke="#000000" stroke-width="1" />
<path d="M203.5 83.5 L205.5 80.5 H206.5 L208.5 83.5 Z" fill="#ffff00" stroke="#000000" stroke-width="0.8" />
<path d="M206.5 88.5 H212.5 L214.5 90.5 V94.5 H206.5 Z" fill="#fff" stroke="#000080" stroke-width="1" />
<path d="M208 91.5 H213 M208 93 H211" fill="none" stroke="#000080" stroke-width="0.9" />
<path d="M224.5 82 L236 93 M235.5 81.5 L224.5 92.5" fill="none" stroke="#000000" stroke-width="2.2" />
<path d="M257 88 Q259 83.6 263 84.6 Q266.6 86 266 90" fill="none" stroke="#000080" stroke-width="1.2" />
<path d="M254.7 85.5 V90.5 H259.7 Z" fill="#000080" stroke="none" stroke-width="1" />
<path d="M288.5 88 Q286.5 83.6 282.5 84.6 Q278.9 86 279.5 90" fill="none" stroke="#000080" stroke-width="1.2" />
<path d="M290.8 85.5 V90.5 H285.8 Z" fill="#000080" stroke="none" stroke-width="1" />
<circle cx="313" cy="86" r="5.3" fill="#fff" stroke="#000" stroke-width="1.3"/>
<path d="M310 84.5 Q311 82.5 313 82.5" fill="none" stroke="#00e0e0" stroke-width="1" />
<path d="M317 90.5 L321 94.5" fill="none" stroke="#000080" stroke-width="2.6" />
<circle cx="333.8" cy="89" r="3.7" fill="#fff" stroke="#000" stroke-width="1.3"/>
<path d="M336.8 92 L339.3 94.5" fill="none" stroke="#000080" stroke-width="2.2" />
<path d="M340.5 83 H344.5 V80.5 L347 83.5 L344.5 86 M346.5 89.5 H342.5 V87 L340 90 L342.5 92.8" fill="none" stroke="#800000" stroke-width="1.3" />
<rect x="13" y="101" width="80" height="31" fill="#d9d9d9" />
<rect x="14" y="102" width="78" height="29" fill="#f0f0f0" />
<rect x="11" y="131" width="1608" height="1" fill="#d9d9d9" />
<rect x="92" y="99" width="85" height="34" fill="#d9d9d9" />
<rect x="93" y="100" width="83" height="33" fill="#ffffff" />
<text x="22.5" y="124" font-family="Liberation Sans" font-size="18" fill="#000000" textLength="66" lengthAdjust="spacingAndGlyphs" >1 p1.au3</text>
<text x="104.5" y="122" font-family="Liberation Sans" font-size="18" fill="#000000" textLength="67" lengthAdjust="spacingAndGlyphs" >2 p2.au3</text>
<rect x="11" y="132" width="81" height="1" fill="#ffffff" />
<rect x="177" y="132" width="1442" height="1" fill="#ffffff" />
<rect x="11" y="133" width="1607" height="1" fill="#a0a0a0" />
<rect x="12" y="134" width="1605" height="1" fill="#696969" />
<rect x="11" y="133" width="1" height="746" fill="#a0a0a0" />
<rect x="12" y="134" width="1" height="745" fill="#696969" />
<rect x="1617" y="134" width="1" height="745" fill="#e3e3e3" />
<rect x="1618" y="133" width="1" height="746" fill="#ffffff" />
<rect x="13" y="135" width="75" height="499" fill="#c0c0c0" />
<rect x="88" y="135" width="16" height="499" fill="#f8f8f8" />
<defs><pattern id="chk" width="2" height="2" patternUnits="userSpaceOnUse"><rect width="2" height="2" fill="#ffffff"/><rect width="1" height="1" fill="#ececec"/><rect x="1" y="1" width="1" height="1" fill="#ececec"/></pattern></defs>
<rect x="88" y="135" width="16" height="499" fill="url(#chk)" />
<rect x="104" y="135" width="1513" height="499" fill="#f0f4f9" />
<text x="67.8" y="151" font-family="Liberation Sans" font-size="15.2" fill="#000000" text-anchor="end" >1</text>
<text x="67.8" y="172" font-family="Liberation Sans" font-size="15.2" fill="#000000" text-anchor="end" >2</text>
<text x="67.8" y="193" font-family="Liberation Sans" font-size="15.2" fill="#000000" text-anchor="end" >3</text>
<text x="67.8" y="214" font-family="Liberation Sans" font-size="15.2" fill="#000000" text-anchor="end" >4</text>
<text x="67.8" y="235" font-family="Liberation Sans" font-size="15.2" fill="#000000" text-anchor="end" >5</text>
<text x="67.8" y="256" font-family="Liberation Sans" font-size="15.2" fill="#000000" text-anchor="end" >6</text>
<text x="67.8" y="277" font-family="Liberation Sans" font-size="15.2" fill="#000000" text-anchor="end" >7</text>
<text x="67.8" y="298" font-family="Liberation Sans" font-size="15.2" fill="#000000" text-anchor="end" >8</text>
<text x="107.9" y="151" font-family="Liberation Mono" font-size="15.2" fill="#000090" textLength="33.0" lengthAdjust="spacingAndGlyphs" stroke="#000090" stroke-width="0.18">Run</text>
<text x="140.9" y="151" font-family="Liberation Mono" font-size="15.2" fill="#ff8000" textLength="11.0" lengthAdjust="spacingAndGlyphs" stroke="#ff8000" stroke-width="0.18">(</text>
<text x="151.9" y="151" font-family="Liberation Mono" font-size="15.2" fill="#ff0000" textLength="341.0" lengthAdjust="spacingAndGlyphs" stroke="#ff0000" stroke-width="0.18">&quot;C:\RL520APP\local\StartRL.exe&quot;</text>
<text x="492.9" y="151" font-family="Liberation Mono" font-size="15.2" fill="#ff8000" textLength="11.0" lengthAdjust="spacingAndGlyphs" stroke="#ff8000" stroke-width="0.18">)</text>
<text x="107.9" y="172" font-family="Liberation Mono" font-size="15.2" fill="#5a5a5a" textLength="55.0" lengthAdjust="spacingAndGlyphs" stroke="#5a5a5a" stroke-width="0.18">$hWin</text>
<text x="173.9" y="172" font-family="Liberation Mono" font-size="15.2" fill="#ff8000" textLength="11.0" lengthAdjust="spacingAndGlyphs" stroke="#ff8000" stroke-width="0.18">=</text>
<text x="195.9" y="172" font-family="Liberation Mono" font-size="15.2" fill="#000090" textLength="132.0" lengthAdjust="spacingAndGlyphs" stroke="#000090" stroke-width="0.18">WinGetHandle</text>
<text x="327.9" y="172" font-family="Liberation Mono" font-size="15.2" fill="#ff8000" textLength="11.0" lengthAdjust="spacingAndGlyphs" stroke="#ff8000" stroke-width="0.18">(</text>
<text x="338.9" y="172" font-family="Liberation Mono" font-size="15.2" fill="#ff0000" textLength="594.0" lengthAdjust="spacingAndGlyphs" stroke="#ff0000" stroke-width="0.18">&quot;[CLASS:WindowsForms10.Window.8.app.0.141b42a_r9_ad1]&quot;</text>
<text x="932.9" y="172" font-family="Liberation Mono" font-size="15.2" fill="#ff8000" textLength="11.0" lengthAdjust="spacingAndGlyphs" stroke="#ff8000" stroke-width="0.18">,</text>
<text x="954.9" y="172" font-family="Liberation Mono" font-size="15.2" fill="#ff0000" textLength="308.0" lengthAdjust="spacingAndGlyphs" stroke="#ff0000" stroke-width="0.18">&quot;Authorized Use Only Screen&quot;</text>
<text x="1262.9" y="172" font-family="Liberation Mono" font-size="15.2" fill="#ff8000" textLength="11.0" lengthAdjust="spacingAndGlyphs" stroke="#ff8000" stroke-width="0.18">)</text>
<text x="107.9" y="193" font-family="Liberation Mono" font-size="15.2" fill="#000090" textLength="132.0" lengthAdjust="spacingAndGlyphs" stroke="#000090" stroke-width="0.18">ControlClick</text>
<text x="239.9" y="193" font-family="Liberation Mono" font-size="15.2" fill="#ff8000" textLength="11.0" lengthAdjust="spacingAndGlyphs" stroke="#ff8000" stroke-width="0.18">(</text>
<text x="250.9" y="193" font-family="Liberation Mono" font-size="15.2" fill="#5a5a5a" textLength="55.0" lengthAdjust="spacingAndGlyphs" stroke="#5a5a5a" stroke-width="0.18">$hWin</text>
<text x="305.9" y="193" font-family="Liberation Mono" font-size="15.2" fill="#ff8000" textLength="11.0" lengthAdjust="spacingAndGlyphs" stroke="#ff8000" stroke-width="0.18">,</text>
<text x="327.9" y="193" font-family="Liberation Mono" font-size="15.2" fill="#ff0000" textLength="22.0" lengthAdjust="spacingAndGlyphs" stroke="#ff0000" stroke-width="0.18">&quot;&quot;</text>
<text x="349.9" y="193" font-family="Liberation Mono" font-size="15.2" fill="#ff8000" textLength="11.0" lengthAdjust="spacingAndGlyphs" stroke="#ff8000" stroke-width="0.18">,</text>
<text x="371.9" y="193" font-family="Liberation Mono" font-size="15.2" fill="#ff0000" textLength="704.0" lengthAdjust="spacingAndGlyphs" stroke="#ff0000" stroke-width="0.18">&quot;[CLASS:WindowsForms10.BUTTON.app.0.141b42a_r9_ad1; INSTANCE:1]&quot;</text>
<text x="1075.9" y="193" font-family="Liberation Mono" font-size="15.2" fill="#ff8000" textLength="11.0" lengthAdjust="spacingAndGlyphs" stroke="#ff8000" stroke-width="0.18">)</text>
<text x="107.9" y="214" font-family="Liberation Mono" font-size="15.2" fill="#000090" textLength="143.0" lengthAdjust="spacingAndGlyphs" stroke="#000090" stroke-width="0.18">WinWaitActive</text>
<text x="250.9" y="214" font-family="Liberation Mono" font-size="15.2" fill="#ff8000" textLength="11.0" lengthAdjust="spacingAndGlyphs" stroke="#ff8000" stroke-width="0.18">(</text>
<text x="261.9" y="214" font-family="Liberation Mono" font-size="15.2" fill="#ff0000" textLength="242.0" lengthAdjust="spacingAndGlyphs" stroke="#ff0000" stroke-width="0.18">&quot;Remittance &amp; Lockbox&quot;</text>
<text x="503.9" y="214" font-family="Liberation Mono" font-size="15.2" fill="#ff8000" textLength="11.0" lengthAdjust="spacingAndGlyphs" stroke="#ff8000" stroke-width="0.18">)</text>
<text x="107.9" y="235" font-family="Liberation Mono" font-size="15.2" fill="#000090" textLength="121.0" lengthAdjust="spacingAndGlyphs" stroke="#000090" stroke-width="0.18">ControlSend</text>
<text x="228.9" y="235" font-family="Liberation Mono" font-size="15.2" fill="#ff8000" textLength="11.0" lengthAdjust="spacingAndGlyphs" stroke="#ff8000" stroke-width="0.18">(</text>
<text x="239.9" y="235" font-family="Liberation Mono" font-size="15.2" fill="#ff0000" textLength="242.0" lengthAdjust="spacingAndGlyphs" stroke="#ff0000" stroke-width="0.18">&quot;Remittance &amp; Lockbox&quot;</text>
<text x="481.9" y="235" font-family="Liberation Mono" font-size="15.2" fill="#ff8000" textLength="11.0" lengthAdjust="spacingAndGlyphs" stroke="#ff8000" stroke-width="0.18">,</text>
<text x="503.9" y="235" font-family="Liberation Mono" font-size="15.2" fill="#ff0000" textLength="22.0" lengthAdjust="spacingAndGlyphs" stroke="#ff0000" stroke-width="0.18">&quot;&quot;</text>
<text x="525.9" y="235" font-family="Liberation Mono" font-size="15.2" fill="#ff8000" textLength="11.0" lengthAdjust="spacingAndGlyphs" stroke="#ff8000" stroke-width="0.18">,</text>
<text x="547.9" y="235" font-family="Liberation Mono" font-size="15.2" fill="#ff0000" textLength="22.0" lengthAdjust="spacingAndGlyphs" stroke="#ff0000" stroke-width="0.18">&quot;&quot;</text>
<text x="569.9" y="235" font-family="Liberation Mono" font-size="15.2" fill="#ff8000" textLength="11.0" lengthAdjust="spacingAndGlyphs" stroke="#ff8000" stroke-width="0.18">,</text>
<text x="591.9" y="235" font-family="Liberation Mono" font-size="15.2" fill="#ff0000" textLength="165.0" lengthAdjust="spacingAndGlyphs" stroke="#ff0000" stroke-width="0.18">&quot;Administrator&quot;</text>
<text x="756.9" y="235" font-family="Liberation Mono" font-size="15.2" fill="#ff8000" textLength="11.0" lengthAdjust="spacingAndGlyphs" stroke="#ff8000" stroke-width="0.18">)</text>
<text x="107.9" y="256" font-family="Liberation Mono" font-size="15.2" fill="#000090" textLength="121.0" lengthAdjust="spacingAndGlyphs" stroke="#000090" stroke-width="0.18">ControlSend</text>
<text x="228.9" y="256" font-family="Liberation Mono" font-size="15.2" fill="#ff8000" textLength="11.0" lengthAdjust="spacingAndGlyphs" stroke="#ff8000" stroke-width="0.18">(</text>
<text x="239.9" y="256" font-family="Liberation Mono" font-size="15.2" fill="#ff0000" textLength="242.0" lengthAdjust="spacingAndGlyphs" stroke="#ff0000" stroke-width="0.18">&quot;Remittance &amp; Lockbox&quot;</text>
<text x="481.9" y="256" font-family="Liberation Mono" font-size="15.2" fill="#ff8000" textLength="11.0" lengthAdjust="spacingAndGlyphs" stroke="#ff8000" stroke-width="0.18">,</text>
<text x="503.9" y="256" font-family="Liberation Mono" font-size="15.2" fill="#ff0000" textLength="22.0" lengthAdjust="spacingAndGlyphs" stroke="#ff0000" stroke-width="0.18">&quot;&quot;</text>
<text x="525.9" y="256" font-family="Liberation Mono" font-size="15.2" fill="#ff8000" textLength="11.0" lengthAdjust="spacingAndGlyphs" stroke="#ff8000" stroke-width="0.18">,</text>
<text x="547.9" y="256" font-family="Liberation Mono" font-size="15.2" fill="#ff0000" textLength="22.0" lengthAdjust="spacingAndGlyphs" stroke="#ff0000" stroke-width="0.18">&quot;&quot;</text>
<text x="569.9" y="256" font-family="Liberation Mono" font-size="15.2" fill="#ff8000" textLength="11.0" lengthAdjust="spacingAndGlyphs" stroke="#ff8000" stroke-width="0.18">,</text>
<text x="591.9" y="256" font-family="Liberation Mono" font-size="15.2" fill="#ff0000" textLength="11.0" lengthAdjust="spacingAndGlyphs" stroke="#ff0000" stroke-width="0.18">&quot;</text>
<text x="602.9" y="256" font-family="Liberation Mono" font-size="15.2" fill="#909090" textLength="55.0" lengthAdjust="spacingAndGlyphs" >{TAB}</text>
<text x="657.9" y="256" font-family="Liberation Mono" font-size="15.2" fill="#ff0000" textLength="11.0" lengthAdjust="spacingAndGlyphs" stroke="#ff0000" stroke-width="0.18">&quot;</text>
<text x="668.9" y="256" font-family="Liberation Mono" font-size="15.2" fill="#ff8000" textLength="11.0" lengthAdjust="spacingAndGlyphs" stroke="#ff8000" stroke-width="0.18">)</text>
<text x="107.9" y="277" font-family="Liberation Mono" font-size="15.2" fill="#000090" textLength="121.0" lengthAdjust="spacingAndGlyphs" stroke="#000090" stroke-width="0.18">ControlSend</text>
<text x="228.9" y="277" font-family="Liberation Mono" font-size="15.2" fill="#ff8000" textLength="11.0" lengthAdjust="spacingAndGlyphs" stroke="#ff8000" stroke-width="0.18">(</text>
<text x="239.9" y="277" font-family="Liberation Mono" font-size="15.2" fill="#ff0000" textLength="242.0" lengthAdjust="spacingAndGlyphs" stroke="#ff0000" stroke-width="0.18">&quot;Remittance &amp; Lockbox&quot;</text>
<text x="481.9" y="277" font-family="Liberation Mono" font-size="15.2" fill="#ff8000" textLength="11.0" lengthAdjust="spacingAndGlyphs" stroke="#ff8000" stroke-width="0.18">,</text>
<text x="503.9" y="277" font-family="Liberation Mono" font-size="15.2" fill="#ff0000" textLength="22.0" lengthAdjust="spacingAndGlyphs" stroke="#ff0000" stroke-width="0.18">&quot;&quot;</text>
<text x="525.9" y="277" font-family="Liberation Mono" font-size="15.2" fill="#ff8000" textLength="11.0" lengthAdjust="spacingAndGlyphs" stroke="#ff8000" stroke-width="0.18">,</text>
<text x="547.9" y="277" font-family="Liberation Mono" font-size="15.2" fill="#ff0000" textLength="22.0" lengthAdjust="spacingAndGlyphs" stroke="#ff0000" stroke-width="0.18">&quot;&quot;</text>
<text x="569.9" y="277" font-family="Liberation Mono" font-size="15.2" fill="#ff8000" textLength="11.0" lengthAdjust="spacingAndGlyphs" stroke="#ff8000" stroke-width="0.18">,</text>
<text x="591.9" y="277" font-family="Liberation Mono" font-size="15.2" fill="#ff0000" textLength="88.0" lengthAdjust="spacingAndGlyphs" stroke="#ff0000" stroke-width="0.18">&quot;Image1&quot;</text>
<text x="679.9" y="277" font-family="Liberation Mono" font-size="15.2" fill="#ff8000" textLength="11.0" lengthAdjust="spacingAndGlyphs" stroke="#ff8000" stroke-width="0.18">)</text>
<text x="107.9" y="298" font-family="Liberation Mono" font-size="15.2" fill="#000090" textLength="121.0" lengthAdjust="spacingAndGlyphs" stroke="#000090" stroke-width="0.18">ControlSend</text>
<text x="228.9" y="298" font-family="Liberation Mono" font-size="15.2" fill="#0000ff" textLength="11.0" lengthAdjust="spacingAndGlyphs" stroke="#0000ff" stroke-width="0.18">(</text>
<text x="239.9" y="298" font-family="Liberation Mono" font-size="15.2" fill="#ff0000" textLength="242.0" lengthAdjust="spacingAndGlyphs" stroke="#ff0000" stroke-width="0.18">&quot;Remittance &amp; Lockbox&quot;</text>
<text x="481.9" y="298" font-family="Liberation Mono" font-size="15.2" fill="#ff8000" textLength="11.0" lengthAdjust="spacingAndGlyphs" stroke="#ff8000" stroke-width="0.18">,</text>
<text x="503.9" y="298" font-family="Liberation Mono" font-size="15.2" fill="#ff0000" textLength="22.0" lengthAdjust="spacingAndGlyphs" stroke="#ff0000" stroke-width="0.18">&quot;&quot;</text>
<text x="525.9" y="298" font-family="Liberation Mono" font-size="15.2" fill="#ff8000" textLength="11.0" lengthAdjust="spacingAndGlyphs" stroke="#ff8000" stroke-width="0.18">,</text>
<text x="547.9" y="298" font-family="Liberation Mono" font-size="15.2" fill="#ff0000" textLength="22.0" lengthAdjust="spacingAndGlyphs" stroke="#ff0000" stroke-width="0.18">&quot;&quot;</text>
<text x="569.9" y="298" font-family="Liberation Mono" font-size="15.2" fill="#ff8000" textLength="11.0" lengthAdjust="spacingAndGlyphs" stroke="#ff8000" stroke-width="0.18">,</text>
<text x="591.9" y="298" font-family="Liberation Mono" font-size="15.2" fill="#ff0000" textLength="11.0" lengthAdjust="spacingAndGlyphs" stroke="#ff0000" stroke-width="0.18">&quot;</text>
<text x="602.9" y="298" font-family="Liberation Mono" font-size="15.2" fill="#909090" textLength="77.0" lengthAdjust="spacingAndGlyphs" >{ENTER}</text>
<text x="679.9" y="298" font-family="Liberation Mono" font-size="15.2" fill="#ff0000" textLength="11.0" lengthAdjust="spacingAndGlyphs" stroke="#ff0000" stroke-width="0.18">&quot;</text>
<text x="690.9" y="298" font-family="Liberation Mono" font-size="15.2" fill="#0000ff" textLength="11.0" lengthAdjust="spacingAndGlyphs" stroke="#0000ff" stroke-width="0.18">)</text>
<rect x="13" y="634" width="1604" height="28" fill="#f0f0f0" />
<rect x="39" y="635" width="1161" height="26" fill="#cdcdcd" />
<path d="M28.5 642.0 L22.5 647.5 L28.5 653.0" fill="none" stroke="#606060" stroke-width="2.7"/>
<path d="M1600.5 642.0 L1606.5 647.5 L1600.5 653.0" fill="none" stroke="#606060" stroke-width="2.7"/>
<rect x="13" y="662" width="1604" height="2" fill="#ffffff" />
<rect x="13" y="664" width="1604" height="1" fill="#a0a0a0" />
<rect x="13" y="665" width="1604" height="1" fill="#696969" />
<rect x="13" y="666" width="1604" height="188" fill="#ffffff" />
<text x="17.5" y="682.5" font-family="Liberation Mono" font-size="15.2" fill="#0000ff" textLength="1265" lengthAdjust="spacingAndGlyphs" >&gt;&quot;C:\Program Files (x86)\AutoIt3\SciTE\..\autoit3.exe&quot; /ErrorStdOut &quot;C:\Users\ArigalaM\Desktop\auto program\p2.au3&quot;</text>
<rect x="13" y="854" width="1604" height="25" fill="#f0f0f0" />
<rect x="39" y="854" width="1240" height="25" fill="#cdcdcd" />
<path d="M28.5 861.0 L22.5 866.5 L28.5 872.0" fill="none" stroke="#606060" stroke-width="2.7"/>
<path d="M1600.5 861.0 L1606.5 866.5 L1600.5 872.0" fill="none" stroke="#606060" stroke-width="2.7"/>
<rect x="11" y="879" width="1608" height="36" fill="#f0f0f0" />
<rect x="11" y="879" width="1608" height="1" fill="#dcdcdc" />
<rect x="11" y="880" width="1608" height="1" fill="#ffffff" />
<rect x="11" y="880" width="1" height="35" fill="#ffffff" />
<rect x="11" y="914" width="1608" height="1" fill="#ffffff" />
<text x="13.8" y="905" font-family="Liberation Sans" font-size="18" fill="#000000" textLength="28.4" lengthAdjust="spacingAndGlyphs" >li=8</text>
<text x="48.2" y="905" font-family="Liberation Sans" font-size="18" fill="#000000" >co=13 INS (CR+LF)</text>
<rect x="1606" y="912" width="2" height="2" fill="#bfbfbf" />
<rect x="1609" y="909" width="2" height="2" fill="#bfbfbf" />
<rect x="1609" y="912" width="2" height="2" fill="#bfbfbf" />
<rect x="1612" y="906" width="2" height="2" fill="#bfbfbf" />
<rect x="1612" y="909" width="2" height="2" fill="#bfbfbf" />
<rect x="1612" y="912" width="2" height="2" fill="#bfbfbf" />
<rect x="1615" y="903" width="2" height="2" fill="#bfbfbf" />
<rect x="1615" y="906" width="2" height="2" fill="#bfbfbf" />
<rect x="1615" y="909" width="2" height="2" fill="#bfbfbf" />
<rect x="1615" y="912" width="2" height="2" fill="#bfbfbf" />
<rect x="662" y="249" width="589" height="416" fill="#ffffff" />
<rect x="662" y="249" width="589" height="1" fill="#9d9d9d" />
<rect x="662" y="249" width="1" height="416" fill="#9d9d9d" />
<rect x="1250" y="249" width="1" height="416" fill="#9d9d9d" />
<rect x="662" y="664" width="589" height="1" fill="#9d9d9d" />
<rect x="700" y="321" width="509.5" height="261" fill="#6a6a6a" />
<rect x="700" y="322.5" width="508.20000000000005" height="258.29999999999995" fill="#ffffff" />
<rect x="1211" y="322" width="24" height="260" fill="#f0f0f0" />
<path d="M1217.5 338 L1222.5 333 L1227.5 338" fill="none" stroke="#c3c3c3" stroke-width="2.6"/>
<path d="M1217.5 566 L1222.5 571 L1227.5 566" fill="none" stroke="#c3c3c3" stroke-width="2.6"/>
<defs><filter id="tb2" x="-2%" y="-2%" width="104%" height="104%"><feGaussianBlur stdDeviation="0.36"/></filter></defs>
<g filter="url(#tb2)">
<text x="868.5" y="292.5" font-family="Liberation Sans" font-size="14.6" fill="#1a1a1a" textLength="176" lengthAdjust="spacingAndGlyphs" stroke="#1a1a1a" stroke-width="0.3">Authorized Use Only Screen</text>
<text x="739.8" y="337.5" font-family="Liberation Sans" font-size="13.9" fill="#1e1e1e" textLength="442.0" lengthAdjust="spacingAndGlyphs" stroke="#1e1e1e" stroke-width="0.4">of this screen is located in the Main Menu language file, LG_Menu.D01</text>
<text x="739.8" y="337.5" font-family="Liberation Sans" font-size="13.9" fill="#1e1e1e" text-anchor="end" stroke="#1e1e1e" stroke-width="0.4">t </text>
<text x="744.8" y="355.5" font-family="Liberation Sans" font-size="13.9" fill="#1e1e1e" textLength="452.5" lengthAdjust="spacingAndGlyphs" stroke="#1e1e1e" stroke-width="0.4">strings 50 through 58 can be customized to display the desired advisory</text>
<text x="744.8" y="355.5" font-family="Liberation Sans" font-size="13.9" fill="#1e1e1e" text-anchor="end" stroke="#1e1e1e" stroke-width="0.4">e </text>
<text x="735.5" y="373.5" font-family="Liberation Sans" font-size="13.9" fill="#1e1e1e" textLength="9.5" lengthAdjust="spacingAndGlyphs" stroke="#1e1e1e" stroke-width="0.4">e.</text>
<text x="735.5" y="373.5" font-family="Liberation Sans" font-size="13.9" fill="#1e1e1e" text-anchor="end" stroke="#1e1e1e" stroke-width="0.4">g</text>
<text x="737" y="391.5" font-family="Liberation Sans" font-size="13.9" fill="#1e1e1e" textLength="460.3" lengthAdjust="spacingAndGlyphs" stroke="#1e1e1e" stroke-width="0.4">of this screen can be suppressed if desired by setting message string 50</text>
<text x="737" y="391.5" font-family="Liberation Sans" font-size="13.9" fill="#1e1e1e" text-anchor="end" stroke="#1e1e1e" stroke-width="0.4">y </text>
<text x="765.2" y="409.5" font-family="Liberation Sans" font-size="13.9" fill="#1e1e1e" textLength="37.8" lengthAdjust="spacingAndGlyphs" stroke="#1e1e1e" stroke-width="0.4">string.</text>
<text x="765.2" y="409.5" font-family="Liberation Sans" font-size="13.9" fill="#1e1e1e" text-anchor="end" stroke="#1e1e1e" stroke-width="0.4">empty </text>
<text x="769.5" y="427.5" font-family="Liberation Sans" font-size="13.9" fill="#1e1e1e" textLength="409.0" lengthAdjust="spacingAndGlyphs" stroke="#1e1e1e" stroke-width="0.4">text can be as long as desired and one message string can span</text>
<text x="769.5" y="427.5" font-family="Liberation Sans" font-size="13.9" fill="#1e1e1e" text-anchor="end" stroke="#1e1e1e" stroke-width="0.4">essage </text>
<text x="737.2" y="445.5" font-family="Liberation Sans" font-size="13.9" fill="#1e1e1e" textLength="31.1" lengthAdjust="spacingAndGlyphs" stroke="#1e1e1e" stroke-width="0.4">lines.</text>
<text x="737.2" y="445.5" font-family="Liberation Sans" font-size="13.9" fill="#1e1e1e" text-anchor="end" stroke="#1e1e1e" stroke-width="0.4">e </text>
<text x="794.8" y="463.5" font-family="Liberation Sans" font-size="13.9" fill="#1e1e1e" textLength="357.7" lengthAdjust="spacingAndGlyphs" stroke="#1e1e1e" stroke-width="0.4">in a row are interpreted as a carriage return and line feed.</text>
<text x="794.8" y="463.5" font-family="Liberation Sans" font-size="13.9" fill="#1e1e1e" text-anchor="end" stroke="#1e1e1e" stroke-width="0.4">characters </text>
<text x="750.2" y="481.5" font-family="Liberation Sans" font-size="13.9" fill="#1e1e1e" textLength="418.6" lengthAdjust="spacingAndGlyphs" stroke="#1e1e1e" stroke-width="0.4">screen is displayed prior to operator signon the text will come from</text>
<text x="750.2" y="481.5" font-family="Liberation Sans" font-size="13.9" fill="#1e1e1e" text-anchor="end" stroke="#1e1e1e" stroke-width="0.4">this </text>
<text x="745" y="499.5" font-family="Liberation Sans" font-size="13.9" fill="#1e1e1e" textLength="174" lengthAdjust="spacingAndGlyphs" stroke="#1e1e1e" stroke-width="0.4">file #1, LG_Menu.D01, only.</text>
<text x="745" y="499.5" font-family="Liberation Sans" font-size="13.9" fill="#1e1e1e" text-anchor="end" stroke="#1e1e1e" stroke-width="0.4">ge </text>
<text x="746.7" y="517.5" font-family="Liberation Sans" font-size="13.9" fill="#1e1e1e" textLength="453.3" lengthAdjust="spacingAndGlyphs" stroke="#1e1e1e" stroke-width="0.4">enter the text in the primary language for your site or multiple languages</text>
<text x="746.7" y="517.5" font-family="Liberation Sans" font-size="13.9" fill="#1e1e1e" text-anchor="end" stroke="#1e1e1e" stroke-width="0.4">ay </text>
<text x="735.5" y="535.5" font-family="Liberation Sans" font-size="13.9" fill="#1e1e1e" textLength="10.5" lengthAdjust="spacingAndGlyphs" stroke="#1e1e1e" stroke-width="0.4">d.</text>
<text x="735.5" y="535.5" font-family="Liberation Sans" font-size="13.9" fill="#1e1e1e" text-anchor="end" stroke="#1e1e1e" stroke-width="0.4">e</text>
<text x="740.6" y="553.5" font-family="Liberation Sans" font-size="13.9" fill="#1e1e1e" textLength="314.9" lengthAdjust="spacingAndGlyphs" stroke="#1e1e1e" stroke-width="0.4">case the text will come from language file #1 only.</text>
<text x="740.6" y="553.5" font-family="Liberation Sans" font-size="13.9" fill="#1e1e1e" text-anchor="end" stroke="#1e1e1e" stroke-width="0.4">er </text>
</g>
<defs><linearGradient id="okg" x1="0" y1="0" x2="0" y2="1"><stop offset="0" stop-color="#e9eff8"/><stop offset="0.07" stop-color="#dfe8f4"/><stop offset="0.16" stop-color="#86a9d3"/><stop offset="0.5" stop-color="#4f83bd"/><stop offset="1" stop-color="#235ca3"/></linearGradient></defs>
<rect x="853.8" y="594.4" width="205.20000000000005" height="37.60000000000002" fill="#d9dde1" />
<rect x="856.9" y="597.2" width="199.39999999999998" height="31.799999999999955" fill="url(#okg)" />
<text x="947" y="617" font-family="Liberation Sans" font-size="14.8" fill="#dfe9f7" textLength="17.8" lengthAdjust="spacingAndGlyphs" >Ok</text>
<g stroke="#555555" stroke-width="1.2"><path d="M1231 663 L1249 645 M1236 663 L1249 650 M1241 663 L1249 655 M1246 663 L1249 660"/></g>
<rect x="53" y="299" width="682" height="695" fill="#1883d7" />
<rect x="54" y="300" width="680" height="693" fill="#f0f0f0" />
<rect x="54" y="300" width="680" height="73" fill="#ffffff" />
<defs><filter id="glow" x="-30%" y="-30%" width="160%" height="160%"><feGaussianBlur stdDeviation="1.1"/></filter></defs>
<circle cx="78" cy="322.3" r="10.2" fill="#9fb4cf" filter="url(#glow)" opacity="0.7"/>
<circle cx="78" cy="322.2" r="9.2" fill="#5e83b0"/>
<path d="M70.92 325.50 L77.28 317.33 Q78.07 316.43 78.89 317.33 L84.80 325.50 Z" fill="#f3f3f4"/>
<path d="M78.07 320.33 L80.21 323.49 H76.37 Z" fill="#5e83b0"/>
<path d="M76.76 323.14 L74.70 325.72" stroke="#5e83b0" stroke-width="0.74"/>
<text x="95.5" y="330" font-family="Liberation Sans" font-size="18" fill="#000000" textLength="249" lengthAdjust="spacingAndGlyphs" >(Frozen) AutoIt v3 Window Info</text>
<rect x="552" y="322" width="15" height="1" fill="#000000" />
<rect x="621.5" y="315.5" width="14" height="14" fill="none" stroke="#cccccc" stroke-width="1"/>
<path d="M692.5 315 L707 329.5 M707 315 L692.5 329.5" stroke="#000000" stroke-width="1.2" fill="none"/>
<text x="65" y="367" font-family="Liberation Sans" font-size="18" fill="#000000" textLength="27" lengthAdjust="spacingAndGlyphs" >File</text>
<text x="113" y="367" font-family="Liberation Sans" font-size="18" fill="#000000" textLength="62.5" lengthAdjust="spacingAndGlyphs" >Options</text>
<text x="197" y="367" font-family="Liberation Sans" font-size="18" fill="#000000" textLength="37" lengthAdjust="spacingAndGlyphs" >Help</text>
<defs><filter id="tb" x="-2%" y="-2%" width="104%" height="104%"><feGaussianBlur stdDeviation="0.38"/></filter></defs>
<rect x="60.5" y="392.5" width="428" height="85" fill="none" stroke="#dcdcdc" stroke-width="1"/>
<rect x="71" y="391" width="137.5" height="3" fill="#f0f0f0" />
<g filter="url(#tb)">
<text x="74" y="397.9" font-family="Liberation Sans" font-size="17.8" fill="#000000" textLength="131.5" lengthAdjust="spacingAndGlyphs" stroke="#000" stroke-width="0.45">Basic Window Info</text>
</g>
<g filter="url(#tb)">
<text x="67" y="425" font-family="Liberation Sans" font-size="17.8" fill="#000000" textLength="32.5" lengthAdjust="spacingAndGlyphs" stroke="#000" stroke-width="0.45">Title:</text>
</g>
<rect x="141" y="406" width="336" height="30" fill="#7a7a7a" />
<rect x="142.5" y="407.5" width="333.0" height="27.0" fill="#f0f0f0" />
<g filter="url(#tb)">
<text x="66" y="460" font-family="Liberation Sans" font-size="17.8" fill="#000000" textLength="41" lengthAdjust="spacingAndGlyphs" stroke="#000" stroke-width="0.45">Class:</text>
</g>
<rect x="141" y="441" width="336" height="29" fill="#7a7a7a" />
<rect x="142.5" y="442.5" width="333.0" height="26.0" fill="#f0f0f0" />
<clipPath id="cpE1"><rect x="143" y="443" width="329.5" height="26"/></clipPath><g clip-path="url(#cpE1)">
<g filter="url(#tb)">
<text x="146" y="461" font-family="Liberation Sans" font-size="17.8" fill="#000000" textLength="372" lengthAdjust="spacingAndGlyphs" stroke="#000" stroke-width="0.45">WindowsForms10.Window.8.app.0.141b42a_r9_ad1</text>
</g>
</g>
<rect x="60.5" y="497.5" width="317" height="86" fill="none" stroke="#dcdcdc" stroke-width="1"/>
<rect x="70.5" y="496" width="129.5" height="3" fill="#f0f0f0" />
<g filter="url(#tb)">
<text x="73.5" y="502.9" font-family="Liberation Sans" font-size="17.8" fill="#000000" textLength="123.5" lengthAdjust="spacingAndGlyphs" stroke="#000" stroke-width="0.45">Basic Control Info</text>
</g>
<g filter="url(#tb)">
<text x="66" y="530" font-family="Liberation Sans" font-size="17.8" fill="#000000" textLength="41" lengthAdjust="spacingAndGlyphs" stroke="#000" stroke-width="0.45">Class:</text>
</g>
<rect x="141" y="511" width="225" height="30" fill="#7a7a7a" />
<rect x="142.5" y="512.5" width="222.0" height="27.0" fill="#f0f0f0" />
<clipPath id="cpE2"><rect x="143" y="513" width="221" height="26"/></clipPath><g clip-path="url(#cpE2)">
<g filter="url(#tb)">
<text x="146" y="531" font-family="Liberation Sans" font-size="17.8" fill="#000000" textLength="368.5" lengthAdjust="spacingAndGlyphs" stroke="#000" stroke-width="0.45">WindowsForms10.BUTTON.app.0.141b42a_r9_ad1</text>
</g>
</g>
<g filter="url(#tb)">
<text x="66" y="565" font-family="Liberation Sans" font-size="17.8" fill="#000000" textLength="64.5" lengthAdjust="spacingAndGlyphs" stroke="#000" stroke-width="0.45">Instance:</text>
</g>
<rect x="141" y="546" width="72" height="29" fill="#7a7a7a" />
<rect x="142.5" y="547.5" width="69.0" height="26.0" fill="#f0f0f0" />
<g filter="url(#tb)">
<text x="146" y="566" font-family="Liberation Sans" font-size="17.8" fill="#000000" stroke="#000" stroke-width="0.45">1</text>
</g>
<rect x="385.5" y="497.5" width="103" height="86" fill="none" stroke="#dcdcdc" stroke-width="1"/>
<rect x="395" y="496" width="84" height="3" fill="#f0f0f0" />
<g filter="url(#tb)">
<text x="398" y="502.9" font-family="Liberation Sans" font-size="17.8" fill="#000000" textLength="78" lengthAdjust="spacingAndGlyphs" stroke="#000" stroke-width="0.45">Finder Tool</text>
</g>
<rect x="413" y="518.5" width="46.5" height="42.0" fill="#000000" />
<rect x="414.5" y="526" width="43.5" height="33" fill="#ffffff" />
<rect x="414.5" y="520" width="43.5" height="4.5" fill="#c0c0c0" />
<rect x="420" y="520" width="32.5" height="4.5" fill="#0000ff" />
<rect x="415.5" y="521" width="3.0" height="3" fill="#606060" />
<rect x="454" y="521" width="3" height="3" fill="#606060" />
<g fill="none" stroke="#000" stroke-width="1.2"><circle cx="436" cy="543" r="12.3"/><circle cx="436" cy="543" r="3"/><path d="M436 530 V540 M436 546 V556 M423 543 H433 M439 543 H449" stroke-width="1.6"/><path d="M432 532 H440 M433 534.5 H439 M434 537 H438 M432 554 H440 M433 551.5 H439 M434 549 H438"/><path d="M425 539 V547 M427.5 540 V546 M430 541 V545 M447 539 V547 M444.5 540 V546 M442 541 V545"/></g>
<g filter="url(#tb)">
<text x="59.5" y="609" font-family="Liberation Sans" font-size="17.8" fill="#000000" textLength="316" lengthAdjust="spacingAndGlyphs" stroke="#000" stroke-width="0.45">(Double-click list entries to copy to clipboard)</text>
</g>
<rect x="58" y="654" width="671" height="335" fill="#d9d9d9" />
<rect x="59" y="655" width="669" height="333" fill="#ffffff" />
<rect x="61" y="627" width="75" height="27" fill="#d9d9d9" />
<rect x="62" y="628" width="73" height="26" fill="#f0f0f0" />
<g filter="url(#tb)">
<text x="68.5" y="646.5" font-family="Liberation Sans" font-size="17.8" fill="#000000" textLength="58" lengthAdjust="spacingAndGlyphs" stroke="#000" stroke-width="0.45">Window</text>
</g>
<rect x="206" y="627" width="97" height="27" fill="#d9d9d9" />
<rect x="207" y="628" width="95" height="26" fill="#f0f0f0" />
<g filter="url(#tb)">
<text x="213.5" y="646.5" font-family="Liberation Sans" font-size="17.8" fill="#000000" textLength="79.5" lengthAdjust="spacingAndGlyphs" stroke="#000" stroke-width="0.45">Visible Text</text>
</g>
<rect x="302" y="627" width="106" height="27" fill="#d9d9d9" />
<rect x="303" y="628" width="104" height="26" fill="#f0f0f0" />
<g filter="url(#tb)">
<text x="312.5" y="646.5" font-family="Liberation Sans" font-size="17.8" fill="#000000" textLength="85.5" lengthAdjust="spacingAndGlyphs" stroke="#000" stroke-width="0.45">Hidden Text</text>
</g>
<rect x="407" y="627" width="88" height="27" fill="#d9d9d9" />
<rect x="408" y="628" width="86" height="26" fill="#f0f0f0" />
<g filter="url(#tb)">
<text x="417.5" y="646.5" font-family="Liberation Sans" font-size="17.8" fill="#000000" textLength="69" lengthAdjust="spacingAndGlyphs" stroke="#000" stroke-width="0.45">StatusBar</text>
</g>
<rect x="494" y="627" width="75" height="27" fill="#d9d9d9" />
<rect x="495" y="628" width="73" height="26" fill="#f0f0f0" />
<g filter="url(#tb)">
<text x="504.5" y="646.5" font-family="Liberation Sans" font-size="17.8" fill="#000000" textLength="55.5" lengthAdjust="spacingAndGlyphs" stroke="#000" stroke-width="0.45">ToolBar</text>
</g>
<rect x="568" y="627" width="67" height="27" fill="#d9d9d9" />
<rect x="569" y="628" width="65" height="26" fill="#f0f0f0" />
<g filter="url(#tb)">
<text x="578" y="646.5" font-family="Liberation Sans" font-size="17.8" fill="#000000" textLength="46.5" lengthAdjust="spacingAndGlyphs" stroke="#000" stroke-width="0.45">Mouse</text>
</g>
<rect x="634" y="627" width="81" height="27" fill="#d9d9d9" />
<rect x="635" y="628" width="79" height="26" fill="#f0f0f0" />
<g filter="url(#tb)">
<text x="643.5" y="646.5" font-family="Liberation Sans" font-size="17.8" fill="#000000" textLength="64" lengthAdjust="spacingAndGlyphs" stroke="#000" stroke-width="0.45">Summary</text>
</g>
<rect x="134" y="624" width="73" height="31" fill="#d9d9d9" />
<rect x="135" y="625" width="71" height="31" fill="#ffffff" />
<g filter="url(#tb)">
<text x="145" y="644.5" font-family="Liberation Sans" font-size="17.8" fill="#000000" textLength="49" lengthAdjust="spacingAndGlyphs" stroke="#000" stroke-width="0.45">Control</text>
</g>
<rect x="63" y="661" width="659" height="322" fill="#828790" />
<rect x="64.5" y="662.5" width="656.0" height="319.0" fill="#ffffff" />
<rect x="219" y="664" width="1.5" height="36" fill="#e5e5e5" />
<g filter="url(#tb)">
<text x="75.5" y="687.5" font-family="Liberation Sans" font-size="17.8" fill="#000000" textLength="57" lengthAdjust="spacingAndGlyphs" stroke="#000" stroke-width="0.45">Property</text>
</g>
<g filter="url(#tb)">
<text x="229.5" y="687.5" font-family="Liberation Sans" font-size="17.8" fill="#000000" textLength="39.5" lengthAdjust="spacingAndGlyphs" stroke="#000" stroke-width="0.45">Value</text>
</g>
<g filter="url(#tb)">
<text x="74.5" y="719.0" font-family="Liberation Sans" font-size="17.8" fill="#000000" textLength="36.5" lengthAdjust="spacingAndGlyphs" stroke="#000" stroke-width="0.45">Class</text>
</g>
<g filter="url(#tb)">
<text x="229.5" y="719.0" font-family="Liberation Sans" font-size="17.8" fill="#000000" textLength="368.5" lengthAdjust="spacingAndGlyphs" stroke="#000" stroke-width="0.45">WindowsForms10.BUTTON.app.0.141b42a_r9_ad1</text>
</g>
<g filter="url(#tb)">
<text x="74.5" y="744.5" font-family="Liberation Sans" font-size="17.8" fill="#000000" textLength="60.5" lengthAdjust="spacingAndGlyphs" stroke="#000" stroke-width="0.45">Instance</text>
</g>
<g filter="url(#tb)">
<text x="229.5" y="744.5" font-family="Liberation Sans" font-size="17.8" fill="#000000" stroke="#000" stroke-width="0.45">1</text>
</g>
<g filter="url(#tb)">
<text x="74.5" y="770.0" font-family="Liberation Sans" font-size="17.8" fill="#000000" textLength="100" lengthAdjust="spacingAndGlyphs" stroke="#000" stroke-width="0.45">ClassnameNN</text>
</g>
<g filter="url(#tb)">
<text x="229.5" y="770.0" font-family="Liberation Sans" font-size="17.8" fill="#000000" textLength="378" lengthAdjust="spacingAndGlyphs" stroke="#000" stroke-width="0.45">WindowsForms10.BUTTON.app.0.141b42a_r9_ad11</text>
</g>
<g filter="url(#tb)">
<text x="74.5" y="795.5" font-family="Liberation Sans" font-size="17.8" fill="#000000" textLength="40.5" lengthAdjust="spacingAndGlyphs" stroke="#000" stroke-width="0.45">Name</text>
</g>
<g filter="url(#tb)">
<text x="229.5" y="795.5" font-family="Liberation Sans" font-size="17.8" fill="#000000" textLength="50" lengthAdjust="spacingAndGlyphs" stroke="#000" stroke-width="0.45">cmdOk</text>
</g>
<g filter="url(#tb)">
<text x="74.5" y="821.0" font-family="Liberation Sans" font-size="17.8" fill="#000000" textLength="118" lengthAdjust="spacingAndGlyphs" stroke="#000" stroke-width="0.45">Advanced Mode</text>
</g>
<g filter="url(#tb)">
<text x="229.5" y="821.0" font-family="Liberation Sans" font-size="17.8" fill="#000000" textLength="111" lengthAdjust="spacingAndGlyphs" stroke="#000" stroke-width="0.45">[NAME:cmdOk]</text>
</g>
<g filter="url(#tb)">
<text x="74.5" y="846.5" font-family="Liberation Sans" font-size="17.8" fill="#000000" textLength="15.5" lengthAdjust="spacingAndGlyphs" stroke="#000" stroke-width="0.45">ID</text>
</g>
<g filter="url(#tb)">
<text x="229.5" y="846.5" font-family="Liberation Sans" font-size="17.8" fill="#000000" textLength="62.2" lengthAdjust="spacingAndGlyphs" stroke="#000" stroke-width="0.45">5768464</text>
</g>
<g filter="url(#tb)">
<text x="74.5" y="872.0" font-family="Liberation Sans" font-size="17.8" fill="#000000" textLength="29.6" lengthAdjust="spacingAndGlyphs" stroke="#000" stroke-width="0.45">Text</text>
</g>
<g filter="url(#tb)">
<text x="229.5" y="872.0" font-family="Liberation Sans" font-size="17.8" fill="#000000" textLength="28.5" lengthAdjust="spacingAndGlyphs" stroke="#000" stroke-width="0.45">&amp;Ok</text>
</g>
<g filter="url(#tb)">
<text x="74.5" y="897.5" font-family="Liberation Sans" font-size="17.8" fill="#000000" textLength="53.7" lengthAdjust="spacingAndGlyphs" stroke="#000" stroke-width="0.45">Position</text>
</g>
<g filter="url(#tb)">
<text x="229.5" y="897.5" font-family="Liberation Sans" font-size="17.8" fill="#000000" textLength="62.7" lengthAdjust="spacingAndGlyphs" stroke="#000" stroke-width="0.45">127, 222</text>
</g>
<g filter="url(#tb)">
<text x="74.5" y="923.0" font-family="Liberation Sans" font-size="17.8" fill="#000000" textLength="28.7" lengthAdjust="spacingAndGlyphs" stroke="#000" stroke-width="0.45">Size</text>
</g>
<g filter="url(#tb)">
<text x="229.5" y="923.0" font-family="Liberation Sans" font-size="17.8" fill="#000000" textLength="53.4" lengthAdjust="spacingAndGlyphs" stroke="#000" stroke-width="0.45">137, 25</text>
</g>
<g filter="url(#tb)">
<text x="74.5" y="948.5" font-family="Liberation Sans" font-size="17.8" fill="#000000" textLength="137" lengthAdjust="spacingAndGlyphs" stroke="#000" stroke-width="0.45">ControlClick Coords</text>
</g>
<g filter="url(#tb)">
<text x="229.5" y="948.5" font-family="Liberation Sans" font-size="17.8" fill="#000000" textLength="44.5" lengthAdjust="spacingAndGlyphs" stroke="#000" stroke-width="0.45">48, 15</text>
</g>
<rect x="695" y="663" width="23.5" height="294" fill="#f0f0f0" />
<rect x="695" y="689.5" width="23.5" height="184.0" fill="#cdcdcd" />
<path d="M701.5 681.5 L706.8 676 L712 681.5" fill="none" stroke="#606060" stroke-width="2.8"/>
<path d="M701.5 939.5 L706.8 945 L712 939.5" fill="none" stroke="#606060" stroke-width="2.8"/>
<rect x="64.5" y="957" width="654.0" height="23" fill="#f0f0f0" />
<rect x="92" y="957" width="341.5" height="23" fill="#cdcdcd" />
<path d="M82.5 963 L77 968.3 L82.5 973.5" fill="none" stroke="#606060" stroke-width="2.8"/>
<path d="M677.5 963 L683 968.3 L677.5 973.5" fill="none" stroke="#606060" stroke-width="2.8"/>
<rect x="0" y="1020" width="1920" height="60" fill="#020409" />
<rect x="596" y="1020" width="73" height="60" fill="#37393c" />
<rect x="302" y="1077.5" width="61" height="2.5" fill="#76b9ed" />
<rect x="377" y="1077.5" width="61" height="2.5" fill="#76b9ed" />
<rect x="452" y="1077.5" width="61" height="2.5" fill="#76b9ed" />
<rect x="527" y="1077.5" width="61" height="2.5" fill="#76b9ed" />
<rect x="596" y="1077.5" width="73" height="2.5" fill="#76b9ed" />
<rect x="677" y="1077.5" width="61" height="2.5" fill="#76b9ed" />
<rect x="752" y="1077.5" width="61" height="2.5" fill="#76b9ed" />
<path d="M23.6 1041.6 L34 1040.1 V1049.4 H23.6 Z M35.3 1039.9 L48.6 1038 V1049.4 H35.3 Z M23.6 1050.7 H34 V1060 L23.6 1058.5 Z M35.3 1050.7 H48.6 V1062 L35.3 1060.2 Z" fill="#ffffff" stroke="none" stroke-width="1" />
<g fill="none" stroke="#fff" stroke-width="1.5"><circle cx="111" cy="1046.7" r="8.2"/><path d="M105.2 1052.6 L96.2 1061.4"/></g>
<g fill="none" stroke="#fff" stroke-width="1.4"><rect x="171.5" y="1040.2" width="17" height="19.3"/><path d="M168.5 1043.2 H165.2 V1056.6 H168.5 M191.5 1043.2 H194.8 V1056.6 H191.5"/></g>
<defs><radialGradient id="ieg" cx="0.5" cy="0.5" r="0.6"><stop offset="0" stop-color="#8fe9fd"/><stop offset="0.55" stop-color="#4fc3f4"/><stop offset="1" stop-color="#1787d6"/></radialGradient><linearGradient id="iey" x1="0" y1="1" x2="1" y2="0"><stop offset="0" stop-color="#f0a800"/><stop offset="0.5" stop-color="#ffd83a"/><stop offset="1" stop-color="#eda500"/></linearGradient></defs>
<path d="M269 1032 C275 1032.3 275 1037.5 272 1041.8" fill="none" stroke="#e9a300" stroke-width="2.3" stroke-linecap="round"/>
<circle cx="258.2" cy="1051" r="14.8" fill="url(#ieg)"/>
<path d="M251.4 1047.9 A6.8 6.8 0 0 1 265 1047.9 Z" fill="#020409"/>
<path d="M251.4 1052.8 H273.5 V1055 H264.6 A6.8 6.6 0 0 1 251.4 1052.8 Z" fill="#020409"/>
<path d="M250.5 1063.6 C240 1068.5 236 1060 243 1049 C250 1038 261 1032 269 1032" fill="none" stroke="url(#iey)" stroke-width="2.7" stroke-linecap="round"/>
<g><path d="M316 1039 Q316 1037 318 1037 H329 L332 1039.6 H346.2 Q348.2 1039.6 348.2 1041.6 V1045 H316 Z" fill="#fbd045"/><rect x="320" y="1038.8" width="6" height="1.3" fill="#ffffff"/><rect x="318.4" y="1038.7" width="1.8" height="1.5" fill="#39a7e6"/><path d="M316 1042 H348.2 V1060.4 Q348.2 1062.2 346.4 1062.2 H317.8 Q316 1062.2 316 1060.4 Z" fill="#fce38d"/><path d="M321.3 1063.5 V1051.6 Q321.3 1050 322.9 1050 H340.6 Q342.2 1050 342.2 1051.6 V1063.5 H336.9 V1055.2 H326.9 V1063.5 Z" fill="#37a9e8"/></g>
<path d="M404.68 1033.41 L408.52 1033.41 L408.57 1036.95 L411.42 1037.71 L413.24 1034.67 L416.55 1036.59 L414.83 1039.68 L416.92 1041.77 L420.01 1040.05 L421.93 1043.36 L418.89 1045.18 L419.65 1048.03 L423.19 1048.08 L423.19 1051.92 L419.65 1051.97 L418.89 1054.82 L421.93 1056.64 L420.01 1059.95 L416.92 1058.23 L414.83 1060.32 L416.55 1063.41 L413.24 1065.33 L411.42 1062.29 L408.57 1063.05 L408.52 1066.59 L404.68 1066.59 L404.63 1063.05 L401.78 1062.29 L399.96 1065.33 L396.65 1063.41 L398.37 1060.32 L396.28 1058.23 L393.19 1059.95 L391.27 1056.64 L394.31 1054.82 L393.55 1051.97 L390.01 1051.92 L390.01 1048.08 L393.55 1048.03 L394.31 1045.18 L391.27 1043.36 L393.19 1040.05 L396.28 1041.77 L398.37 1039.68 L396.65 1036.59 L399.96 1034.67 L401.78 1037.71 L404.63 1036.95 Z" fill="#d4d4d4"/>
<defs><linearGradient id="ecg" x1="0" y1="0" x2="0" y2="1"><stop offset="0" stop-color="#1d1a30"/><stop offset="0.6" stop-color="#2d2550"/><stop offset="1" stop-color="#5f4a9a"/></linearGradient><linearGradient id="eco" x1="0" y1="0" x2="0" y2="1"><stop offset="0" stop-color="#ffa733"/><stop offset="1" stop-color="#c75a00"/></linearGradient></defs>
<circle cx="406.6" cy="1050.0" r="11.2" fill="url(#ecg)"/>
<text x="392.9" y="1048.4" font-family="Liberation Sans" font-size="7.4" fill="#ff9420" font-weight="bold" textLength="28" lengthAdjust="spacingAndGlyphs" font-style="italic" stroke="#7a3000" stroke-width="0.25">Java EE</text>
<text x="401.6" y="1056" font-family="Liberation Sans" font-size="7.4" fill="#ff9420" font-weight="bold" textLength="12.2" lengthAdjust="spacingAndGlyphs" stroke="#7a3000" stroke-width="0.25">IDE</text>
<path d="M481.85 1042.01 L496.42 1042.01 A16.5 16.5 0 0 1 481.28 1066.25 L488.56 1053.63 A7.75 7.75 0 0 0 481.85 1042.01 Z" fill="#fdd23f"/>
<path d="M488.56 1053.63 L481.28 1066.25 A16.5 16.5 0 0 1 467.85 1041.02 L475.14 1053.63 A7.75 7.75 0 0 0 488.56 1053.63 Z" fill="#19a15f"/>
<path d="M475.14 1053.63 L467.85 1041.02 A16.5 16.5 0 0 1 496.42 1042.01 L481.85 1042.01 A7.75 7.75 0 0 0 475.14 1053.63 Z" fill="#de4b3c"/>
<circle cx="481.85" cy="1049.76" r="7.7" fill="#f4f4f4"/>
<circle cx="481.85" cy="1049.76" r="6.05" fill="#4c8bf5"/>
<defs><radialGradient id="sga" cx="0.45" cy="0.4" r="0.65"><stop offset="0" stop-color="#46578f"/><stop offset="0.6" stop-color="#222e60"/><stop offset="1" stop-color="#0a1030"/></radialGradient><clipPath id="sca"><circle cx="557.1" cy="1049.85" r="17.6"/></clipPath></defs>
<circle cx="557.1" cy="1049.85" r="17.6" fill="url(#sga)"/>
<g clip-path="url(#sca)" fill="none">
<path d="M541.0 1062.0 Q540.0 1046.0 550.0 1033.5" stroke="#eef2fb" stroke-width="1.45" opacity="0.85"/>
<path d="M544.4 1060.8 Q544.2 1045.0 554.9 1033.2" stroke="#eef2fb" stroke-width="1.45" opacity="0.77"/>
<path d="M547.8 1059.6 Q548.4 1044.0 559.8 1032.9" stroke="#eef2fb" stroke-width="1.45" opacity="0.69"/>
<path d="M551.2 1058.4 Q552.6 1043.0 564.7 1032.6" stroke="#eef2fb" stroke-width="1.45" opacity="0.61"/>
<path d="M554.6 1057.2 Q556.8 1042.0 569.6 1032.3" stroke="#eef2fb" stroke-width="1.45" opacity="0.53"/>
<path d="M558.0 1056.0 Q561.0 1041.0 574.5 1032.0" stroke="#eef2fb" stroke-width="1.45" opacity="0.45"/>
<path d="M561.4 1054.8 Q565.2 1040.0 579.4 1031.7" stroke="#eef2fb" stroke-width="1.45" opacity="0.37"/>
<path d="M560.0 1034.0 Q568.0 1037.5 577.0 1041.0" stroke="#7299e2" stroke-width="1.20" opacity="0.62"/>
<path d="M560.5 1037.1 Q568.0 1040.6 577.0 1044.5" stroke="#7299e2" stroke-width="1.20" opacity="0.62"/>
<path d="M561.0 1040.2 Q568.0 1043.7 577.0 1048.0" stroke="#7299e2" stroke-width="1.20" opacity="0.62"/>
<path d="M561.5 1043.3 Q568.0 1046.8 577.0 1051.5" stroke="#7299e2" stroke-width="1.20" opacity="0.62"/>
<path d="M562.0 1046.4 Q568.0 1049.9 577.0 1055.0" stroke="#7299e2" stroke-width="1.20" opacity="0.62"/>
<path d="M562.5 1049.5 Q568.0 1053.0 577.0 1058.5" stroke="#7299e2" stroke-width="1.20" opacity="0.62"/>
<path d="M563.0 1052.6 Q568.0 1056.1 577.0 1062.0" stroke="#7299e2" stroke-width="1.20" opacity="0.62"/>
<path d="M542.0 1058.0 Q556.0 1063.0 574.0 1057.0" stroke="#6a7fc4" stroke-width="1.10" opacity="0.55"/>
<path d="M542.0 1060.6 Q556.0 1065.6 574.0 1059.6" stroke="#6a7fc4" stroke-width="1.10" opacity="0.55"/>
<path d="M542.0 1063.2 Q556.0 1068.2 574.0 1062.2" stroke="#6a7fc4" stroke-width="1.10" opacity="0.55"/>
<path d="M542.0 1065.8 Q556.0 1070.8 574.0 1064.8" stroke="#6a7fc4" stroke-width="1.10" opacity="0.55"/>
<path d="M542.0 1068.4 Q556.0 1073.4 574.0 1067.4" stroke="#6a7fc4" stroke-width="1.10" opacity="0.55"/>
</g>
<path d="M545.6 1055.9 L556.1 1042.4 L567.4 1055.9 Z" fill="#e6e6e8"/>
<path d="M556.5 1048.0 L560.3 1053.0 H553.6 Z" fill="#243266"/>
<path d="M550.2 1056.0 L555.6 1048.6" stroke="#1a244a" stroke-width="1.00"/>
<path d="M545.6 1056.3 H567.4" stroke="#10183a" stroke-width="0.80" opacity="0.8"/>
<circle cx="632.02" cy="1049.85" r="18.05" fill="#f3f3f4"/>
<circle cx="632.02" cy="1049.85" r="14.3" fill="#5b84b1"/>
<path d="M621.05 1054.96 L630.90 1042.30 Q632.13 1040.90 633.40 1042.30 L642.56 1054.96 Z" fill="#f3f3f4"/>
<path d="M632.13 1046.95 L635.45 1051.85 H629.49 Z" fill="#5b84b1"/>
<path d="M630.10 1051.30 L626.90 1055.30" stroke="#5b84b1" stroke-width="1.15"/>
<path d="M716.07 1031.96 L725 1035.16 V1063.9 L716.07 1067.95 L689.24 1059.22 L715.86 1062.54 Z" fill="#8661c5"/>
<path fill-rule="evenodd" d="M690.94 1041.97 L693.07 1041.76 L698.4 1044.95 L706.49 1037.07 L711.39 1039.2 V1055.39 L706.49 1057.3 L698.4 1049.64 L693.29 1052.83 L690.94 1051.77 Z M693.07 1044.74 L696.05 1047.29 L693.07 1049.85 Z M701.17 1047.29 L706.7 1043.04 V1051.13 Z" fill="#8661c5"/>
<defs><linearGradient id="lg_r" x1="0" y1="0" x2="1" y2="1"><stop offset="0" stop-color="#f0a9a2"/><stop offset="1" stop-color="#cf241a"/></linearGradient><linearGradient id="lg_y" x1="0" y1="0" x2="1" y2="1"><stop offset="0" stop-color="#f8dc6a"/><stop offset="0.5" stop-color="#ecb010"/><stop offset="1" stop-color="#dc9a00"/></linearGradient><linearGradient id="lg_b" x1="0" y1="0" x2="1" y2="1"><stop offset="0" stop-color="#a9c8ff"/><stop offset="1" stop-color="#3a72dd"/></linearGradient></defs>
<rect x="766.1" y="1034.1" width="31.7" height="30.65" rx="1.5" fill="#aeaeae"/>
<rect x="767.2" y="1035.2" width="11.699999999999932" height="6.7999999999999545" fill="#020409" />
<rect x="767.2" y="1043" width="11.699999999999932" height="12.400000000000091" fill="url(#lg_r)" />
<rect x="767.2" y="1056.7" width="4.599999999999909" height="7.0" fill="#020409" />
<rect x="773.1" y="1056.7" width="5.7999999999999545" height="7.0" fill="#020409" />
<rect x="779.9" y="1035.2" width="17.100000000000023" height="16.59999999999991" fill="url(#lg_y)" />
<rect x="779.9" y="1053" width="17.100000000000023" height="10.700000000000045" fill="url(#lg_b)" />
<path d="M1637.5 1053.5 L1646 1045.3 L1654.5 1053.5" fill="none" stroke="#fff" stroke-width="1.4"/>
<g fill="none" stroke="#fff" stroke-width="1.3"><rect x="1673.5" y="1041.7" width="20" height="13.3"/><rect x="1670.5" y="1041.7" width="6" height="7" fill="#020409"/><path d="M1673.5 1048.7 V1058 M1673.5 1058 H1687 M1682 1055 V1058 M1677.5 1058.3 H1687"/><path d="M1672.5 1044.5 H1674.5"/></g>
<g fill="none" stroke="#fff" stroke-width="1.3"><path d="M1707.3 1046.5 H1711 L1715.5 1041.7 V1058.3 L1711 1053.5 H1707.3 Z"/><path d="M1719 1046.8 Q1721.2 1050 1719 1053.2 M1722.3 1044.3 Q1726 1050 1722.3 1055.7 M1725.6 1041.8 Q1731 1050 1725.6 1058.2"/></g>
<text x="1754" y="1043" font-family="Liberation Sans" font-size="17.5" fill="#ffffff" textLength="66" lengthAdjust="spacingAndGlyphs" >9:45 AM</text>
<text x="1751.7" y="1071" font-family="Liberation Sans" font-size="17.5" fill="#ffffff" textLength="73" lengthAdjust="spacingAndGlyphs" >7/2/2019</text>
<path d="M1858.7 1038.7 H1881.3 V1056.3 H1874.2 L1870 1060.6 L1865.8 1056.3 H1858.7 Z" fill="none" stroke="#fff" stroke-width="1.4"/>
<rect x="1913" y="1020" width="1" height="60" fill="#5d5f62" />
</svg>
</body></html>
